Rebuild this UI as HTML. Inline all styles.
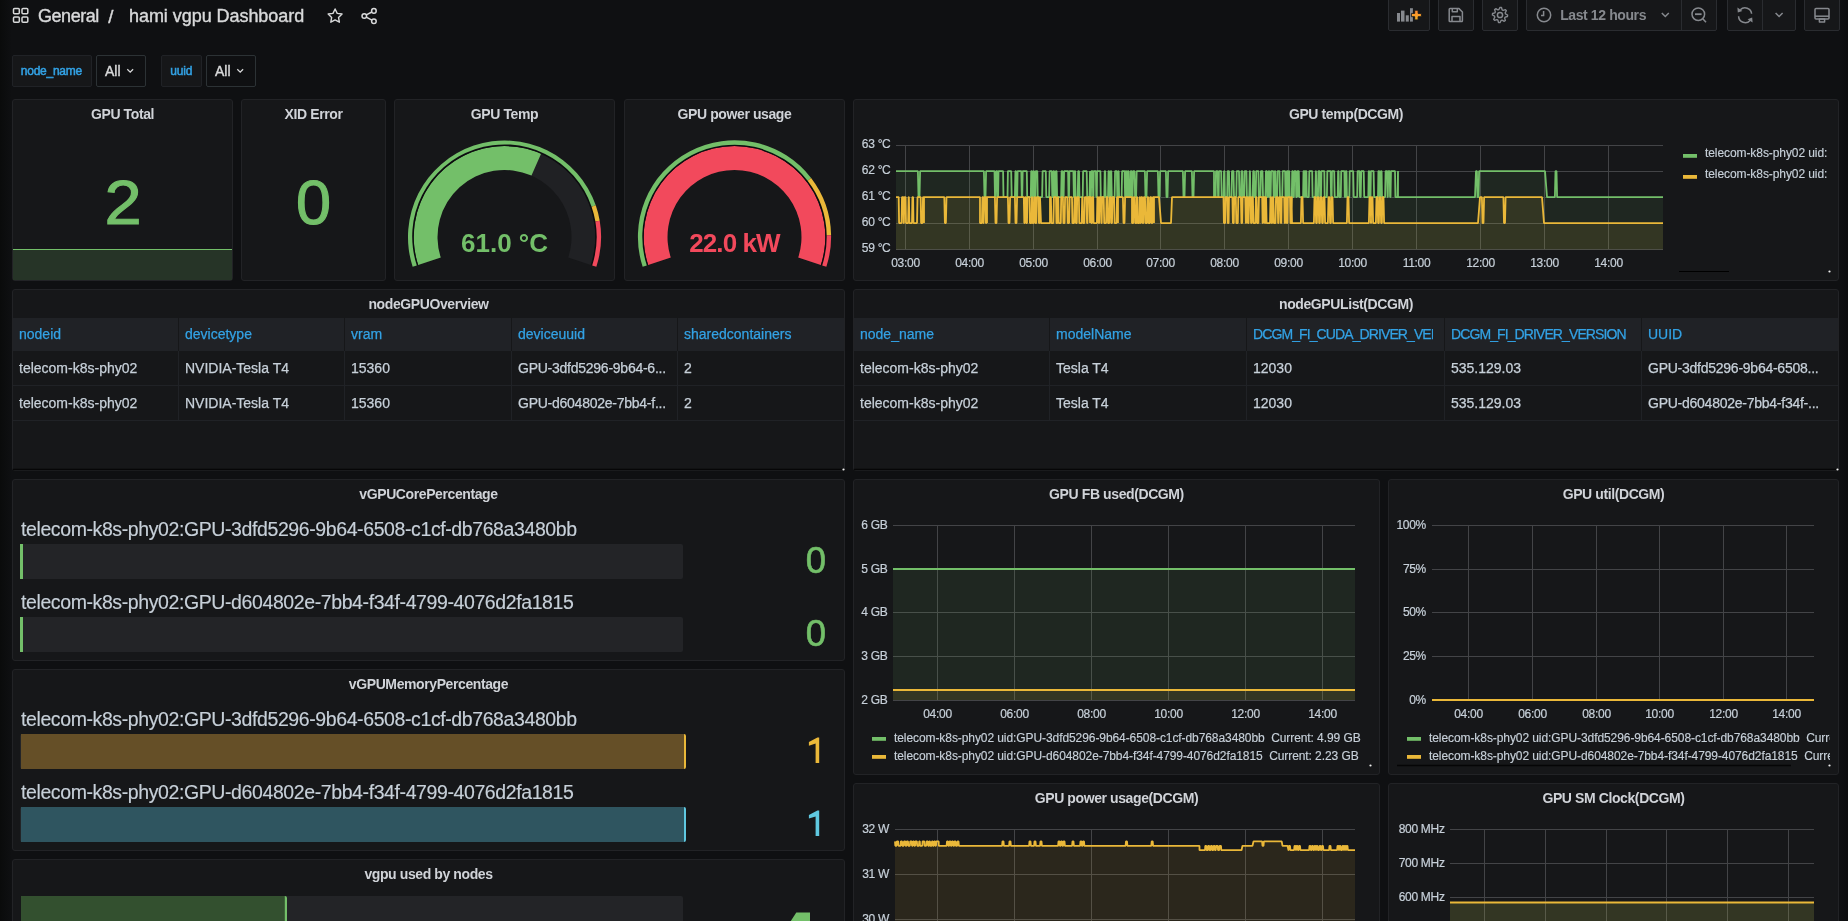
<!DOCTYPE html><html><head><meta charset="utf-8"><style>
html,body{-webkit-font-smoothing:antialiased;margin:0;padding:0;width:1848px;height:921px;overflow:hidden;background:#0f1012;font-family:"Liberation Sans",sans-serif;}
body{position:relative;}
.t{position:absolute;white-space:nowrap;}
.p{position:absolute;background:#161719;border:1px solid #222326;border-radius:3px;}
.a{position:absolute;}
svg.full{position:absolute;left:0;top:0;}
</style></head><body>
<div class="a" style="left:0;top:0;width:12px;height:921px;background:linear-gradient(90deg,#0a0b0b,#0f1012)"></div>
<div class="a" style="left:1840px;top:0;width:8px;height:921px;background:linear-gradient(90deg,#0f1012,#0c0d0e)"></div>
<div class="a" style="left:1388px;top:-3px;width:40px;height:32px;background:#161719;border:1px solid #2a2c30;border-radius:2px"></div>
<div class="a" style="left:1438px;top:-3px;width:34px;height:32px;background:#161719;border:1px solid #2a2c30;border-radius:2px"></div>
<div class="a" style="left:1482px;top:-3px;width:34px;height:32px;background:#161719;border:1px solid #2a2c30;border-radius:2px"></div>
<div class="a" style="left:1526px;top:-3px;width:189px;height:32px;background:#161719;border:1px solid #2a2c30;border-radius:2px"></div>
<div class="a" style="left:1727px;top:-3px;width:67px;height:32px;background:#161719;border:1px solid #2a2c30;border-radius:2px"></div>
<div class="a" style="left:1804px;top:-3px;width:34px;height:32px;background:#161719;border:1px solid #2a2c30;border-radius:2px"></div>
<div class="a" style="left:12px;top:55px;width:78px;height:30px;background:#161719;border:1px solid #202226;border-radius:2px"></div>
<div class="a" style="left:96px;top:55px;width:48px;height:30px;background:#0f1012;border:1px solid #2c3235;border-radius:2px"></div>
<div class="a" style="left:161px;top:55px;width:39px;height:30px;background:#161719;border:1px solid #202226;border-radius:2px"></div>
<div class="a" style="left:206px;top:55px;width:48px;height:30px;background:#0f1012;border:1px solid #2c3235;border-radius:2px"></div>
<div class="p" style="left:12px;top:99px;width:219px;height:180px"></div>
<div class="p" style="left:241px;top:99px;width:143px;height:180px"></div>
<div class="p" style="left:394px;top:99px;width:219px;height:180px"></div>
<div class="p" style="left:624px;top:99px;width:219px;height:180px"></div>
<div class="p" style="left:853px;top:99px;width:984px;height:180px"></div>
<div class="p" style="left:12px;top:289px;width:831px;height:180px"></div>
<div class="p" style="left:853px;top:289px;width:984px;height:180px"></div>
<div class="p" style="left:12px;top:479px;width:831px;height:180px"></div>
<div class="p" style="left:853px;top:479px;width:525px;height:294px"></div>
<div class="p" style="left:1388px;top:479px;width:449px;height:294px"></div>
<div class="p" style="left:12px;top:669px;width:831px;height:180px"></div>
<div class="p" style="left:12px;top:859px;width:831px;height:180px"></div>
<div class="p" style="left:853px;top:783px;width:525px;height:294px"></div>
<div class="p" style="left:1388px;top:783px;width:449px;height:294px"></div>
<svg class="full" width="1848" height="921" viewBox="0 0 1848 921"><rect x="13.5" y="8.5" width="5.8" height="5.3" rx="1" fill="none" stroke="#d8d9da" stroke-width="1.5"/>
<rect x="22" y="8.5" width="5.8" height="5.3" rx="1" fill="none" stroke="#d8d9da" stroke-width="1.5"/>
<rect x="13.5" y="17" width="5.8" height="5.3" rx="1" fill="none" stroke="#d8d9da" stroke-width="1.5"/>
<rect x="22" y="17" width="5.8" height="5.3" rx="1" fill="none" stroke="#d8d9da" stroke-width="1.5"/>
<polygon points="335.10,9.00 337.22,13.39 342.04,14.04 338.52,17.41 339.39,22.21 335.10,19.90 330.81,22.21 331.68,17.41 328.16,14.04 332.98,13.39" fill="none" stroke="#d8d9da" stroke-width="1.4" stroke-linejoin="round"/>
<g fill="none" stroke="#d8d9da" stroke-width="1.5"><circle cx="364.3" cy="16" r="2.3"/><circle cx="373.9" cy="10.9" r="2.3"/><circle cx="373.9" cy="21.2" r="2.3"/><line x1="366.3" y1="14.9" x2="371.9" y2="12"/><line x1="366.3" y1="17.1" x2="371.9" y2="20.1"/></g>
<line x1="1681.5" y1="0" x2="1681.5" y2="30" stroke="#2a2c30"/>
<line x1="1762.5" y1="0" x2="1762.5" y2="30" stroke="#2a2c30"/>
<g fill="#86898e"><rect x="1397" y="13" width="3" height="8.6"/><rect x="1401" y="10.6" width="3.5" height="11"/><rect x="1405.8" y="15.3" width="3" height="6.3"/><rect x="1410" y="8.2" width="2.9" height="13.4"/></g>
<defs><linearGradient id="og" x1="0" y1="0" x2="0" y2="1"><stop offset="0" stop-color="#ff8833"/><stop offset="1" stop-color="#f5b324"/></linearGradient></defs>
<path d="M1414.7,10.2 h3.4 v3.2 h3.3 v3.3 h-3.3 v3.2 h-3.4 v-3.2 h-3.3 v-3.3 h3.3 Z" fill="url(#og)" stroke="#161719" stroke-width="0.9"/>
<g fill="none" stroke="#86898e" stroke-width="1.5" stroke-linejoin="round"><path d="M1450,8.6 h9 l3.4,3.4 v8.8 a0.8,0.8 0 0 1 -0.8,0.8 h-11.6 a0.8,0.8 0 0 1 -0.8,-0.8 v-11.4 a0.8,0.8 0 0 1 0.8,-0.8 Z"/><path d="M1452.3,8.8 v3 h5 v-3"/><path d="M1452,21.2 v-4.6 h8 v4.6"/></g>
<path d="M1500.00,7.40 L1501.48,7.55 L1502.14,9.83 L1503.11,10.34 L1505.37,9.63 L1506.32,10.78 L1505.17,12.86 L1505.49,13.91 L1507.60,15.00 L1507.45,16.48 L1505.17,17.14 L1504.66,18.11 L1505.37,20.37 L1504.22,21.32 L1502.14,20.17 L1501.09,20.49 L1500.00,22.60 L1498.52,22.45 L1497.86,20.17 L1496.89,19.66 L1494.63,20.37 L1493.68,19.22 L1494.83,17.14 L1494.51,16.09 L1492.40,15.00 L1492.55,13.52 L1494.83,12.86 L1495.34,11.89 L1494.63,9.63 L1495.78,8.68 L1497.86,9.83 L1498.91,9.51Z" fill="none" stroke="#86898e" stroke-width="1.4" stroke-linejoin="round"/>
<circle cx="1500" cy="15" r="2.6" fill="none" stroke="#86898e" stroke-width="1.5"/>
<g fill="none" stroke="#86898e" stroke-width="1.5"><circle cx="1544" cy="15" r="6.7"/><path d="M1543.6,11 v4.6 h-2.6"/></g>
<path d="M1661.8,13 l3.5,3.5 l3.5,-3.5" fill="none" stroke="#86898e" stroke-width="1.5"/>
<g fill="none" stroke="#86898e" stroke-width="1.5"><circle cx="1698.3" cy="14.2" r="6.3"/><line x1="1695" y1="14.2" x2="1701.6" y2="14.2" stroke-width="1.8"/><line x1="1703" y1="19" x2="1706" y2="22.3"/></g>
<g fill="none" stroke="#86898e" stroke-width="1.5"><path d="M1738.6,16.2 a6.6,6.6 0 0 0 11.7,4"/><path d="M1751.6,13.8 a6.6,6.6 0 0 0 -11.3,-4"/></g>
<path d="M1737.4,7.5 l0.4,5 l4.6,-1.6 Z M1752.6,22.6 l-0.4,-5 l-4.6,1.6 Z" fill="#86898e"/>
<path d="M1775.6,13 l3.5,3.5 l3.5,-3.5" fill="none" stroke="#86898e" stroke-width="1.5"/>
<g fill="none" stroke="#86898e" stroke-width="1.5" stroke-linejoin="round"><rect x="1815" y="8.4" width="14" height="10.6" rx="1"/><line x1="1815" y1="16.2" x2="1829" y2="16.2"/><rect x="1819.4" y="19" width="5.2" height="3"/></g>
<path d="M127.3,69.2 l2.9,2.9 l2.9,-2.9" fill="none" stroke="#d8d9da" stroke-width="1.3"/>
<path d="M237.3,69.2 l2.9,2.9 l2.9,-2.9" fill="none" stroke="#d8d9da" stroke-width="1.3"/>
<rect x="13" y="249" width="219" height="31" fill="#263427"/>
<line x1="13" y1="249.5" x2="232" y2="249.5" stroke="#73bf69" stroke-width="1"/>
<path d="M418.14,264.96 A90.8,90.8 0 1 1 590.86,264.96 L568.22,257.60 A67,67 0 1 0 440.78,257.60 Z" fill="#202124"/>
<path d="M418.14,264.96 A90.8,90.8 0 0 1 541.08,153.80 L531.49,175.58 A67,67 0 0 0 440.78,257.60 Z" fill="#73bf69"/>
<path d="M416.81,265.39 A92.2,92.2 0 1 1 592.19,265.39 L590.86,264.96 A90.8,90.8 0 1 0 418.14,264.96 Z" fill="#0c0d0f"/>
<path d="M412.63,266.75 A96.6,96.6 0 0 1 595.75,205.21 L591.60,206.65 A92.2,92.2 0 0 0 416.81,265.39 Z" fill="#73bf69"/>
<path d="M595.75,205.21 A96.6,96.6 0 0 1 599.73,220.71 L595.40,221.45 A92.2,92.2 0 0 0 591.60,206.65 Z" fill="#eab839"/>
<path d="M599.73,220.71 A96.6,96.6 0 0 1 596.37,266.75 L592.19,265.39 A92.2,92.2 0 0 0 595.40,221.45 Z" fill="#f2495c"/>
<path d="M648.14,264.96 A90.8,90.8 0 1 1 820.86,264.96 L798.22,257.60 A67,67 0 1 0 670.78,257.60 Z" fill="#202124"/>
<path d="M648.14,264.96 A90.8,90.8 0 1 1 820.86,264.96 L798.22,257.60 A67,67 0 1 0 670.78,257.60 Z" fill="#f2495c"/>
<path d="M646.81,265.39 A92.2,92.2 0 1 1 822.19,265.39 L820.86,264.96 A90.8,90.8 0 1 0 648.14,264.96 Z" fill="#0c0d0f"/>
<path d="M642.63,266.75 A96.6,96.6 0 0 1 811.13,178.08 L807.64,180.76 A92.2,92.2 0 0 0 646.81,265.39 Z" fill="#73bf69"/>
<path d="M811.13,178.08 A96.6,96.6 0 0 1 831.09,235.20 L826.69,235.28 A92.2,92.2 0 0 0 807.64,180.76 Z" fill="#eab839"/>
<path d="M831.09,235.20 A96.6,96.6 0 0 1 826.37,266.75 L822.19,265.39 A92.2,92.2 0 0 0 826.69,235.28 Z" fill="#f2495c"/>
<line x1="896" y1="145.5" x2="1663" y2="145.5" stroke="#434447" stroke-width="1"/>
<line x1="896" y1="171.5" x2="1663" y2="171.5" stroke="#434447" stroke-width="1"/>
<line x1="896" y1="197.5" x2="1663" y2="197.5" stroke="#434447" stroke-width="1"/>
<line x1="896" y1="223.5" x2="1663" y2="223.5" stroke="#434447" stroke-width="1"/>
<line x1="896" y1="249.5" x2="1663" y2="249.5" stroke="#434447" stroke-width="1"/>
<line x1="905.5" y1="145" x2="905.5" y2="250" stroke="#434447" stroke-width="1"/>
<line x1="969.5" y1="145" x2="969.5" y2="250" stroke="#434447" stroke-width="1"/>
<line x1="1033.5" y1="145" x2="1033.5" y2="250" stroke="#434447" stroke-width="1"/>
<line x1="1097.5" y1="145" x2="1097.5" y2="250" stroke="#434447" stroke-width="1"/>
<line x1="1160.5" y1="145" x2="1160.5" y2="250" stroke="#434447" stroke-width="1"/>
<line x1="1224.5" y1="145" x2="1224.5" y2="250" stroke="#434447" stroke-width="1"/>
<line x1="1288.5" y1="145" x2="1288.5" y2="250" stroke="#434447" stroke-width="1"/>
<line x1="1352.5" y1="145" x2="1352.5" y2="250" stroke="#434447" stroke-width="1"/>
<line x1="1416.5" y1="145" x2="1416.5" y2="250" stroke="#434447" stroke-width="1"/>
<line x1="1480.5" y1="145" x2="1480.5" y2="250" stroke="#434447" stroke-width="1"/>
<line x1="1544.5" y1="145" x2="1544.5" y2="250" stroke="#434447" stroke-width="1"/>
<line x1="1608.5" y1="145" x2="1608.5" y2="250" stroke="#434447" stroke-width="1"/>
<path d="M896,171.1 L917,171.1 L917.9,171.1 L918.5,197.1 L919.5,197.1 L920.1,171.1 L983,171.1 L983.9,171.1 L984.5,197.1 L985.5,197.1 L986.1,171.1 L994,171.1 L994.5,171.1 L995.0,197.1 L995.6,197.1 L996.1,171.1 L997.2,171.1 L997.6,197.1 L998.1,197.1 L998.5,171.1 L1003.1,171.1 L1003.5,197.1 L1007.5,197.1 L1007.9,171.1 L1011.2,171.1 L1011.7,197.1 L1014.9,197.1 L1015.4,171.1 L1016.0,171.1 L1016.5,197.1 L1017.2,197.1 L1017.6,171.1 L1021.3,171.1 L1021.8,197.1 L1022.2,197.1 L1022.7,171.1 L1026.8,171.1 L1027.2,197.1 L1030.8,197.1 L1031.2,171.1 L1032.0,171.1 L1032.4,197.1 L1033.0,197.1 L1033.4,171.1 L1034.0,171.1 L1034.4,197.1 L1035.3,197.1 L1035.7,171.1 L1037.3,171.1 L1037.7,197.1 L1042.1,197.1 L1042.6,171.1 L1045.8,171.1 L1046.3,197.1 L1049.1,197.1 L1049.6,171.1 L1051.8,171.1 L1052.3,197.1 L1053.0,197.1 L1053.4,171.1 L1054.1,171.1 L1054.6,197.1 L1055.4,197.1 L1055.9,171.1 L1056.6,171.1 L1057.1,197.1 L1061.1,197.1 L1061.6,171.1 L1062.4,171.1 L1062.9,197.1 L1063.6,197.1 L1064.1,171.1 L1068.1,171.1 L1068.5,197.1 L1069.0,197.1 L1069.4,171.1 L1073.4,171.1 L1073.9,197.1 L1074.2,197.1 L1074.7,171.1 L1075.2,171.1 L1075.6,197.1 L1077.7,197.1 L1078.2,171.1 L1079.0,171.1 L1079.5,197.1 L1082.7,197.1 L1083.1,171.1 L1086.7,171.1 L1087.2,197.1 L1089.5,197.1 L1090,171.1 L1090,197.1 L1090.9,197.1 L1091.4,171.1 L1092.6,171.1 L1093.1,197.1 L1093.4,197.1 L1093.8,171.1 L1095.9,171.1 L1096.3,197.1 L1096.7,197.1 L1097.1,171.1 L1100.4,171.1 L1100.8,197.1 L1104.3,197.1 L1104.7,171.1 L1105.2,171.1 L1105.7,197.1 L1108.0,197.1 L1108.5,171.1 L1109.1,171.1 L1109.6,197.1 L1110.3,197.1 L1110.7,171.1 L1111.3,171.1 L1111.8,197.1 L1114.6,197.1 L1115.1,171.1 L1116.9,171.1 L1117.3,197.1 L1117.9,197.1 L1118.4,171.1 L1118.7,171.1 L1119.1,197.1 L1121.6,197.1 L1122.1,171.1 L1124.6,171.1 L1125.1,197.1 L1125.4,197.1 L1125.8,171.1 L1126.4,171.1 L1126.9,197.1 L1127.4,197.1 L1127.8,171.1 L1128.6,171.1 L1129.0,197.1 L1130.2,197.1 L1130.7,171.1 L1131.6,171.1 L1132.1,197.1 L1132.5,197.1 L1133,171.1 L1134.5,171.1 L1135.1,197.1 L1136.1,197.1 L1136.7,171.1 L1144.9,171.1 L1145.5,197.1 L1146.5,197.1 L1147.1,171.1 L1157.9,171.1 L1158.5,197.1 L1159.5,197.1 L1160.1,171.1 L1165.9,171.1 L1166.5,197.1 L1167.5,197.1 L1168.1,171.1 L1182.9,171.1 L1183.5,197.1 L1184.5,197.1 L1185.1,171.1 L1191.9,171.1 L1192.5,197.1 L1193.5,197.1 L1194.1,171.1 L1197,171.1 L1214,171.1 L1214,197.1 L1215.6,197.1 L1216.0,171.1 L1217.6,171.1 L1218.1,197.1 L1218.6,197.1 L1219.0,171.1 L1221.2,171.1 L1221.7,197.1 L1223.6,197.1 L1224.0,171.1 L1224.5,171.1 L1224.9,197.1 L1227.2,197.1 L1227.6,171.1 L1229.0,171.1 L1229.4,197.1 L1231.5,197.1 L1232.0,171.1 L1233.5,171.1 L1234.0,197.1 L1236.3,197.1 L1236.7,171.1 L1239.0,171.1 L1239.5,197.1 L1241.0,197.1 L1241.5,171.1 L1242.4,171.1 L1242.8,197.1 L1244.2,197.1 L1244.7,171.1 L1246.5,171.1 L1246.9,197.1 L1249.2,197.1 L1249.7,171.1 L1250.0,171.1 L1250.5,197.1 L1252.7,197.1 L1253.2,171.1 L1254.0,171.1 L1254.5,197.1 L1255.7,197.1 L1256.2,171.1 L1258.4,171.1 L1258.8,197.1 L1260.4,197.1 L1260.9,171.1 L1262.5,171.1 L1263.0,197.1 L1265.4,197.1 L1265.9,171.1 L1266.9,171.1 L1267.4,197.1 L1268.2,197.1 L1268.7,171.1 L1269.3,171.1 L1269.7,197.1 L1270.6,197.1 L1271.1,171.1 L1273.2,171.1 L1273.7,197.1 L1274.4,197.1 L1274.8,171.1 L1275.3,171.1 L1275.7,197.1 L1277.1,197.1 L1277.6,171.1 L1279.5,171.1 L1280.0,197.1 L1282.2,197.1 L1282.7,171.1 L1285.1,171.1 L1285.5,197.1 L1286.4,197.1 L1286.9,171.1 L1287.8,171.1 L1288.2,197.1 L1288.5,197.1 L1288.9,171.1 L1289.3,171.1 L1289.7,197.1 L1291.8,197.1 L1292.2,171.1 L1292.8,171.1 L1293.2,197.1 L1293.9,197.1 L1294.3,171.1 L1295.8,171.1 L1296.2,197.1 L1296.8,197.1 L1297.3,171.1 L1297.5,171.1 L1298,197.1 L1298,171.1 L1298.8,171.1 L1299.3,197.1 L1303.1,197.1 L1303.5,171.1 L1304.4,171.1 L1304.8,197.1 L1305.1,197.1 L1305.5,171.1 L1306.4,171.1 L1306.8,197.1 L1308.8,197.1 L1309.3,171.1 L1312.2,171.1 L1312.6,197.1 L1315.3,197.1 L1315.8,171.1 L1316.0,171.1 L1316.5,197.1 L1318.0,197.1 L1318.4,171.1 L1319.7,171.1 L1320.2,197.1 L1321.0,197.1 L1321.4,171.1 L1324.3,171.1 L1324.7,197.1 L1326.9,197.1 L1327.3,171.1 L1330.6,171.1 L1331.1,197.1 L1331.6,197.1 L1332.0,171.1 L1334.2,171.1 L1334.7,197.1 L1337.7,197.1 L1338.1,171.1 L1338.6,171.1 L1339.1,197.1 L1340.8,197.1 L1341.2,171.1 L1344.4,171.1 L1344.8,197.1 L1345.3,197.1 L1345.8,171.1 L1346.5,171.1 L1346.9,197.1 L1349.3,197.1 L1349.7,171.1 L1353.2,171.1 L1353.7,197.1 L1357.2,197.1 L1357.6,171.1 L1359.5,171.1 L1360.0,197.1 L1360.7,197.1 L1361.2,171.1 L1363.7,171.1 L1364.2,197.1 L1368.3,197.1 L1368.7,171.1 L1369.2,171.1 L1369.7,197.1 L1370.5,197.1 L1370.9,171.1 L1373.6,171.1 L1374.1,197.1 L1378.0,197.1 L1378.4,171.1 L1379.3,171.1 L1379.7,197.1 L1380.5,197.1 L1380.9,171.1 L1381.6,171.1 L1382.0,197.1 L1385.1,197.1 L1385.6,171.1 L1387.1,171.1 L1387.6,197.1 L1387.8,197.1 L1388.3,171.1 L1389.7,171.1 L1390.1,197.1 L1390.5,197.1 L1391.0,171.1 L1395.0,171.1 L1395.4,197.1 L1397.5,197.1 L1398,171.1 L1398,197.1 L1475,197.1 L1476,171.1 L1476.9,171.1 L1477.5,197.1 L1478.5,197.1 L1479.1,171.1 L1545,171.1 L1547,197.1 L1554.9,197.1 L1555.5,171.1 L1556.5,171.1 L1557.1,197.1 L1663,197.1 L1663,249.5 L896,249.5 Z" fill="#73bf69" fill-opacity="0.1"/>
<path d="M896,197.1 L898.7,197.1 L899.1,223.1 L901.5,223.1 L902.0,197.1 L903.2,197.1 L903.6,223.1 L903.9,223.1 L904.3,197.1 L905.6,197.1 L906.0,223.1 L908.1,223.1 L908.6,197.1 L908.9,197.1 L909.4,223.1 L912.0,223.1 L912.4,197.1 L913.1,197.1 L913.5,223.1 L917.0,223.1 L917.5,197.1 L920.7,197.1 L921.1,223.1 L922.5,223.1 L923.0,197.1 L923.5,197.1 L924,223.1 L924,197.1 L944.3,197.1 L944.9,223.1 L945.9,223.1 L946.5,197.1 L980,197.1 L980,223.1 L981.9,223.1 L982.4,197.1 L982.9,197.1 L983.3,223.1 L983.6,223.1 L984.1,197.1 L985.4,197.1 L985.9,223.1 L986.4,223.1 L986.9,197.1 L986.5,197.1 L987,223.1 L987,197.1 L994.9,197.1 L995.5,223.1 L996.5,223.1 L997.1,197.1 L1007.9,197.1 L1008.5,223.1 L1009.5,223.1 L1010.1,197.1 L1014.9,197.1 L1015.5,223.1 L1016.5,223.1 L1017.1,197.1 L1022,197.1 L1023.8,197.1 L1024.3,223.1 L1024.7,223.1 L1025.2,197.1 L1025.8,197.1 L1026.2,223.1 L1027.0,223.1 L1027.4,197.1 L1029.5,197.1 L1029.9,223.1 L1031.4,223.1 L1031.8,197.1 L1032.2,197.1 L1032.6,223.1 L1033.7,223.1 L1034.2,197.1 L1035.0,197.1 L1035.4,223.1 L1036.3,223.1 L1036.7,197.1 L1038.5,197.1 L1038.9,223.1 L1039.5,223.1 L1040,197.1 L1041,223.1 L1050,223.1 L1050,197.1 L1050.9,197.1 L1051.4,223.1 L1053.4,223.1 L1053.9,197.1 L1056.0,197.1 L1056.4,223.1 L1057.4,223.1 L1057.8,197.1 L1058.3,197.1 L1058.7,223.1 L1060.8,223.1 L1061.2,197.1 L1062.9,197.1 L1063.4,223.1 L1064.6,223.1 L1065.1,197.1 L1067.3,197.1 L1067.7,223.1 L1069.1,223.1 L1069.6,197.1 L1072.0,197.1 L1072.4,223.1 L1074.1,223.1 L1074.6,197.1 L1075.4,197.1 L1075.9,223.1 L1076.8,223.1 L1077.2,197.1 L1078.9,197.1 L1079.3,223.1 L1081.7,223.1 L1082.2,197.1 L1082.5,197.1 L1083.0,223.1 L1084.4,223.1 L1084.8,197.1 L1086.6,197.1 L1087.0,223.1 L1087.5,223.1 L1087.9,197.1 L1089.5,197.1 L1090,223.1 L1090,197.1 L1090.9,197.1 L1091.4,223.1 L1092.0,223.1 L1092.4,197.1 L1093.2,197.1 L1093.6,223.1 L1096.9,223.1 L1097.4,197.1 L1098.2,197.1 L1098.7,223.1 L1099.2,223.1 L1099.6,197.1 L1100.9,197.1 L1101.4,223.1 L1101.7,223.1 L1102.1,197.1 L1103.7,197.1 L1104.2,223.1 L1106.1,223.1 L1106.5,197.1 L1107.6,197.1 L1108.0,223.1 L1109.3,223.1 L1109.8,197.1 L1110.9,197.1 L1111.3,223.1 L1112.0,223.1 L1112.5,197.1 L1114.1,197.1 L1114.6,223.1 L1116.6,223.1 L1117.0,197.1 L1117.5,197.1 L1118,223.1 L1118,197.1 L1122.9,197.1 L1123.5,223.1 L1124.5,223.1 L1125.1,197.1 L1132,197.1 L1132,223.1 L1133.3,223.1 L1133.7,197.1 L1134.8,197.1 L1135.3,223.1 L1136.5,223.1 L1136.9,197.1 L1137.3,197.1 L1137.7,223.1 L1139.3,223.1 L1139.7,197.1 L1140.1,197.1 L1140.5,223.1 L1140.8,223.1 L1141.2,197.1 L1142.2,197.1 L1142.6,223.1 L1143.4,223.1 L1143.8,197.1 L1145.0,197.1 L1145.5,223.1 L1146.9,223.1 L1147.4,197.1 L1148.2,197.1 L1148.6,223.1 L1149.8,223.1 L1150.2,197.1 L1151.2,197.1 L1151.6,223.1 L1152.4,223.1 L1152.9,197.1 L1153.5,197.1 L1154,223.1 L1154,197.1 L1159,197.1 L1161,223.1 L1171,223.1 L1172,197.1 L1223,197.1 L1223.5,197.1 L1223.9,223.1 L1225.1,223.1 L1225.5,197.1 L1227.2,197.1 L1227.7,223.1 L1228.6,223.1 L1229.0,197.1 L1232.4,197.1 L1232.9,223.1 L1233.8,223.1 L1234.2,197.1 L1235.8,197.1 L1236.3,223.1 L1237.8,223.1 L1238.3,197.1 L1240.9,197.1 L1241.4,223.1 L1242.2,223.1 L1242.6,197.1 L1245.3,197.1 L1245.8,223.1 L1246.1,223.1 L1246.5,197.1 L1247.4,197.1 L1247.9,223.1 L1248.6,223.1 L1249.1,197.1 L1250.6,197.1 L1251.0,223.1 L1251.5,223.1 L1252.0,197.1 L1252.9,197.1 L1253.4,223.1 L1255.4,223.1 L1255.9,197.1 L1256.6,197.1 L1257.1,223.1 L1258.4,223.1 L1258.9,197.1 L1262.2,197.1 L1262.6,223.1 L1263.0,223.1 L1263.4,197.1 L1264.4,197.1 L1264.8,223.1 L1265.3,223.1 L1265.8,197.1 L1266.1,197.1 L1266.6,223.1 L1270.0,223.1 L1270.5,197.1 L1271.1,197.1 L1271.6,223.1 L1272.1,223.1 L1272.6,197.1 L1273.4,197.1 L1273.8,223.1 L1275.5,223.1 L1276.0,197.1 L1277.6,197.1 L1278.1,223.1 L1278.5,223.1 L1279.0,197.1 L1280.3,197.1 L1280.8,223.1 L1281.3,223.1 L1281.7,197.1 L1284.2,197.1 L1284.7,223.1 L1285.2,223.1 L1285.7,197.1 L1286.3,197.1 L1286.7,223.1 L1287.4,223.1 L1287.8,197.1 L1290.0,197.1 L1290.4,223.1 L1291.5,223.1 L1291.9,197.1 L1291.5,197.1 L1292,223.1 L1300.9,223.1 L1301.5,197.1 L1302.5,197.1 L1303.1,223.1 L1313.9,223.1 L1314.5,197.1 L1315.5,197.1 L1316.1,223.1 L1316.9,223.1 L1317.5,197.1 L1318.5,197.1 L1319.1,223.1 L1319.9,223.1 L1320.5,197.1 L1321.5,197.1 L1322.1,223.1 L1322.9,223.1 L1323.5,197.1 L1324.5,197.1 L1325.1,223.1 L1327.9,223.1 L1328.5,197.1 L1329.5,197.1 L1330.1,223.1 L1330.9,223.1 L1331.5,197.1 L1332.5,197.1 L1333.1,223.1 L1346.9,223.1 L1347.5,197.1 L1348.5,197.1 L1349.1,223.1 L1368.9,223.1 L1369.5,197.1 L1370.5,197.1 L1371.1,223.1 L1370.9,223.1 L1371.5,197.1 L1372.5,197.1 L1373.1,223.1 L1375.9,223.1 L1376.5,197.1 L1377.5,197.1 L1378.1,223.1 L1378.9,223.1 L1379.5,197.1 L1380.5,197.1 L1381.1,223.1 L1381.9,223.1 L1382.5,197.1 L1383.5,197.1 L1384.1,223.1 L1386,223.1 L1478,223.1 L1480,197.1 L1481.9,197.1 L1482.5,223.1 L1483.5,223.1 L1484.1,197.1 L1503.4,197.1 L1504.0,223.1 L1505.0,223.1 L1505.6,197.1 L1542,197.1 L1544,223.1 L1663,223.1 L1663,249.5 L896,249.5 Z" fill="#eab839" fill-opacity="0.1"/>
<path d="M896,171.1 L917,171.1 L917.9,171.1 L918.5,197.1 L919.5,197.1 L920.1,171.1 L983,171.1 L983.9,171.1 L984.5,197.1 L985.5,197.1 L986.1,171.1 L994,171.1 L994.5,171.1 L995.0,197.1 L995.6,197.1 L996.1,171.1 L997.2,171.1 L997.6,197.1 L998.1,197.1 L998.5,171.1 L1003.1,171.1 L1003.5,197.1 L1007.5,197.1 L1007.9,171.1 L1011.2,171.1 L1011.7,197.1 L1014.9,197.1 L1015.4,171.1 L1016.0,171.1 L1016.5,197.1 L1017.2,197.1 L1017.6,171.1 L1021.3,171.1 L1021.8,197.1 L1022.2,197.1 L1022.7,171.1 L1026.8,171.1 L1027.2,197.1 L1030.8,197.1 L1031.2,171.1 L1032.0,171.1 L1032.4,197.1 L1033.0,197.1 L1033.4,171.1 L1034.0,171.1 L1034.4,197.1 L1035.3,197.1 L1035.7,171.1 L1037.3,171.1 L1037.7,197.1 L1042.1,197.1 L1042.6,171.1 L1045.8,171.1 L1046.3,197.1 L1049.1,197.1 L1049.6,171.1 L1051.8,171.1 L1052.3,197.1 L1053.0,197.1 L1053.4,171.1 L1054.1,171.1 L1054.6,197.1 L1055.4,197.1 L1055.9,171.1 L1056.6,171.1 L1057.1,197.1 L1061.1,197.1 L1061.6,171.1 L1062.4,171.1 L1062.9,197.1 L1063.6,197.1 L1064.1,171.1 L1068.1,171.1 L1068.5,197.1 L1069.0,197.1 L1069.4,171.1 L1073.4,171.1 L1073.9,197.1 L1074.2,197.1 L1074.7,171.1 L1075.2,171.1 L1075.6,197.1 L1077.7,197.1 L1078.2,171.1 L1079.0,171.1 L1079.5,197.1 L1082.7,197.1 L1083.1,171.1 L1086.7,171.1 L1087.2,197.1 L1089.5,197.1 L1090,171.1 L1090,197.1 L1090.9,197.1 L1091.4,171.1 L1092.6,171.1 L1093.1,197.1 L1093.4,197.1 L1093.8,171.1 L1095.9,171.1 L1096.3,197.1 L1096.7,197.1 L1097.1,171.1 L1100.4,171.1 L1100.8,197.1 L1104.3,197.1 L1104.7,171.1 L1105.2,171.1 L1105.7,197.1 L1108.0,197.1 L1108.5,171.1 L1109.1,171.1 L1109.6,197.1 L1110.3,197.1 L1110.7,171.1 L1111.3,171.1 L1111.8,197.1 L1114.6,197.1 L1115.1,171.1 L1116.9,171.1 L1117.3,197.1 L1117.9,197.1 L1118.4,171.1 L1118.7,171.1 L1119.1,197.1 L1121.6,197.1 L1122.1,171.1 L1124.6,171.1 L1125.1,197.1 L1125.4,197.1 L1125.8,171.1 L1126.4,171.1 L1126.9,197.1 L1127.4,197.1 L1127.8,171.1 L1128.6,171.1 L1129.0,197.1 L1130.2,197.1 L1130.7,171.1 L1131.6,171.1 L1132.1,197.1 L1132.5,197.1 L1133,171.1 L1134.5,171.1 L1135.1,197.1 L1136.1,197.1 L1136.7,171.1 L1144.9,171.1 L1145.5,197.1 L1146.5,197.1 L1147.1,171.1 L1157.9,171.1 L1158.5,197.1 L1159.5,197.1 L1160.1,171.1 L1165.9,171.1 L1166.5,197.1 L1167.5,197.1 L1168.1,171.1 L1182.9,171.1 L1183.5,197.1 L1184.5,197.1 L1185.1,171.1 L1191.9,171.1 L1192.5,197.1 L1193.5,197.1 L1194.1,171.1 L1197,171.1 L1214,171.1 L1214,197.1 L1215.6,197.1 L1216.0,171.1 L1217.6,171.1 L1218.1,197.1 L1218.6,197.1 L1219.0,171.1 L1221.2,171.1 L1221.7,197.1 L1223.6,197.1 L1224.0,171.1 L1224.5,171.1 L1224.9,197.1 L1227.2,197.1 L1227.6,171.1 L1229.0,171.1 L1229.4,197.1 L1231.5,197.1 L1232.0,171.1 L1233.5,171.1 L1234.0,197.1 L1236.3,197.1 L1236.7,171.1 L1239.0,171.1 L1239.5,197.1 L1241.0,197.1 L1241.5,171.1 L1242.4,171.1 L1242.8,197.1 L1244.2,197.1 L1244.7,171.1 L1246.5,171.1 L1246.9,197.1 L1249.2,197.1 L1249.7,171.1 L1250.0,171.1 L1250.5,197.1 L1252.7,197.1 L1253.2,171.1 L1254.0,171.1 L1254.5,197.1 L1255.7,197.1 L1256.2,171.1 L1258.4,171.1 L1258.8,197.1 L1260.4,197.1 L1260.9,171.1 L1262.5,171.1 L1263.0,197.1 L1265.4,197.1 L1265.9,171.1 L1266.9,171.1 L1267.4,197.1 L1268.2,197.1 L1268.7,171.1 L1269.3,171.1 L1269.7,197.1 L1270.6,197.1 L1271.1,171.1 L1273.2,171.1 L1273.7,197.1 L1274.4,197.1 L1274.8,171.1 L1275.3,171.1 L1275.7,197.1 L1277.1,197.1 L1277.6,171.1 L1279.5,171.1 L1280.0,197.1 L1282.2,197.1 L1282.7,171.1 L1285.1,171.1 L1285.5,197.1 L1286.4,197.1 L1286.9,171.1 L1287.8,171.1 L1288.2,197.1 L1288.5,197.1 L1288.9,171.1 L1289.3,171.1 L1289.7,197.1 L1291.8,197.1 L1292.2,171.1 L1292.8,171.1 L1293.2,197.1 L1293.9,197.1 L1294.3,171.1 L1295.8,171.1 L1296.2,197.1 L1296.8,197.1 L1297.3,171.1 L1297.5,171.1 L1298,197.1 L1298,171.1 L1298.8,171.1 L1299.3,197.1 L1303.1,197.1 L1303.5,171.1 L1304.4,171.1 L1304.8,197.1 L1305.1,197.1 L1305.5,171.1 L1306.4,171.1 L1306.8,197.1 L1308.8,197.1 L1309.3,171.1 L1312.2,171.1 L1312.6,197.1 L1315.3,197.1 L1315.8,171.1 L1316.0,171.1 L1316.5,197.1 L1318.0,197.1 L1318.4,171.1 L1319.7,171.1 L1320.2,197.1 L1321.0,197.1 L1321.4,171.1 L1324.3,171.1 L1324.7,197.1 L1326.9,197.1 L1327.3,171.1 L1330.6,171.1 L1331.1,197.1 L1331.6,197.1 L1332.0,171.1 L1334.2,171.1 L1334.7,197.1 L1337.7,197.1 L1338.1,171.1 L1338.6,171.1 L1339.1,197.1 L1340.8,197.1 L1341.2,171.1 L1344.4,171.1 L1344.8,197.1 L1345.3,197.1 L1345.8,171.1 L1346.5,171.1 L1346.9,197.1 L1349.3,197.1 L1349.7,171.1 L1353.2,171.1 L1353.7,197.1 L1357.2,197.1 L1357.6,171.1 L1359.5,171.1 L1360.0,197.1 L1360.7,197.1 L1361.2,171.1 L1363.7,171.1 L1364.2,197.1 L1368.3,197.1 L1368.7,171.1 L1369.2,171.1 L1369.7,197.1 L1370.5,197.1 L1370.9,171.1 L1373.6,171.1 L1374.1,197.1 L1378.0,197.1 L1378.4,171.1 L1379.3,171.1 L1379.7,197.1 L1380.5,197.1 L1380.9,171.1 L1381.6,171.1 L1382.0,197.1 L1385.1,197.1 L1385.6,171.1 L1387.1,171.1 L1387.6,197.1 L1387.8,197.1 L1388.3,171.1 L1389.7,171.1 L1390.1,197.1 L1390.5,197.1 L1391.0,171.1 L1395.0,171.1 L1395.4,197.1 L1397.5,197.1 L1398,171.1 L1398,197.1 L1475,197.1 L1476,171.1 L1476.9,171.1 L1477.5,197.1 L1478.5,197.1 L1479.1,171.1 L1545,171.1 L1547,197.1 L1554.9,197.1 L1555.5,171.1 L1556.5,171.1 L1557.1,197.1 L1663,197.1" fill="none" stroke="#73bf69" stroke-width="1.8" stroke-linejoin="bevel"/>
<path d="M896,197.1 L898.7,197.1 L899.1,223.1 L901.5,223.1 L902.0,197.1 L903.2,197.1 L903.6,223.1 L903.9,223.1 L904.3,197.1 L905.6,197.1 L906.0,223.1 L908.1,223.1 L908.6,197.1 L908.9,197.1 L909.4,223.1 L912.0,223.1 L912.4,197.1 L913.1,197.1 L913.5,223.1 L917.0,223.1 L917.5,197.1 L920.7,197.1 L921.1,223.1 L922.5,223.1 L923.0,197.1 L923.5,197.1 L924,223.1 L924,197.1 L944.3,197.1 L944.9,223.1 L945.9,223.1 L946.5,197.1 L980,197.1 L980,223.1 L981.9,223.1 L982.4,197.1 L982.9,197.1 L983.3,223.1 L983.6,223.1 L984.1,197.1 L985.4,197.1 L985.9,223.1 L986.4,223.1 L986.9,197.1 L986.5,197.1 L987,223.1 L987,197.1 L994.9,197.1 L995.5,223.1 L996.5,223.1 L997.1,197.1 L1007.9,197.1 L1008.5,223.1 L1009.5,223.1 L1010.1,197.1 L1014.9,197.1 L1015.5,223.1 L1016.5,223.1 L1017.1,197.1 L1022,197.1 L1023.8,197.1 L1024.3,223.1 L1024.7,223.1 L1025.2,197.1 L1025.8,197.1 L1026.2,223.1 L1027.0,223.1 L1027.4,197.1 L1029.5,197.1 L1029.9,223.1 L1031.4,223.1 L1031.8,197.1 L1032.2,197.1 L1032.6,223.1 L1033.7,223.1 L1034.2,197.1 L1035.0,197.1 L1035.4,223.1 L1036.3,223.1 L1036.7,197.1 L1038.5,197.1 L1038.9,223.1 L1039.5,223.1 L1040,197.1 L1041,223.1 L1050,223.1 L1050,197.1 L1050.9,197.1 L1051.4,223.1 L1053.4,223.1 L1053.9,197.1 L1056.0,197.1 L1056.4,223.1 L1057.4,223.1 L1057.8,197.1 L1058.3,197.1 L1058.7,223.1 L1060.8,223.1 L1061.2,197.1 L1062.9,197.1 L1063.4,223.1 L1064.6,223.1 L1065.1,197.1 L1067.3,197.1 L1067.7,223.1 L1069.1,223.1 L1069.6,197.1 L1072.0,197.1 L1072.4,223.1 L1074.1,223.1 L1074.6,197.1 L1075.4,197.1 L1075.9,223.1 L1076.8,223.1 L1077.2,197.1 L1078.9,197.1 L1079.3,223.1 L1081.7,223.1 L1082.2,197.1 L1082.5,197.1 L1083.0,223.1 L1084.4,223.1 L1084.8,197.1 L1086.6,197.1 L1087.0,223.1 L1087.5,223.1 L1087.9,197.1 L1089.5,197.1 L1090,223.1 L1090,197.1 L1090.9,197.1 L1091.4,223.1 L1092.0,223.1 L1092.4,197.1 L1093.2,197.1 L1093.6,223.1 L1096.9,223.1 L1097.4,197.1 L1098.2,197.1 L1098.7,223.1 L1099.2,223.1 L1099.6,197.1 L1100.9,197.1 L1101.4,223.1 L1101.7,223.1 L1102.1,197.1 L1103.7,197.1 L1104.2,223.1 L1106.1,223.1 L1106.5,197.1 L1107.6,197.1 L1108.0,223.1 L1109.3,223.1 L1109.8,197.1 L1110.9,197.1 L1111.3,223.1 L1112.0,223.1 L1112.5,197.1 L1114.1,197.1 L1114.6,223.1 L1116.6,223.1 L1117.0,197.1 L1117.5,197.1 L1118,223.1 L1118,197.1 L1122.9,197.1 L1123.5,223.1 L1124.5,223.1 L1125.1,197.1 L1132,197.1 L1132,223.1 L1133.3,223.1 L1133.7,197.1 L1134.8,197.1 L1135.3,223.1 L1136.5,223.1 L1136.9,197.1 L1137.3,197.1 L1137.7,223.1 L1139.3,223.1 L1139.7,197.1 L1140.1,197.1 L1140.5,223.1 L1140.8,223.1 L1141.2,197.1 L1142.2,197.1 L1142.6,223.1 L1143.4,223.1 L1143.8,197.1 L1145.0,197.1 L1145.5,223.1 L1146.9,223.1 L1147.4,197.1 L1148.2,197.1 L1148.6,223.1 L1149.8,223.1 L1150.2,197.1 L1151.2,197.1 L1151.6,223.1 L1152.4,223.1 L1152.9,197.1 L1153.5,197.1 L1154,223.1 L1154,197.1 L1159,197.1 L1161,223.1 L1171,223.1 L1172,197.1 L1223,197.1 L1223.5,197.1 L1223.9,223.1 L1225.1,223.1 L1225.5,197.1 L1227.2,197.1 L1227.7,223.1 L1228.6,223.1 L1229.0,197.1 L1232.4,197.1 L1232.9,223.1 L1233.8,223.1 L1234.2,197.1 L1235.8,197.1 L1236.3,223.1 L1237.8,223.1 L1238.3,197.1 L1240.9,197.1 L1241.4,223.1 L1242.2,223.1 L1242.6,197.1 L1245.3,197.1 L1245.8,223.1 L1246.1,223.1 L1246.5,197.1 L1247.4,197.1 L1247.9,223.1 L1248.6,223.1 L1249.1,197.1 L1250.6,197.1 L1251.0,223.1 L1251.5,223.1 L1252.0,197.1 L1252.9,197.1 L1253.4,223.1 L1255.4,223.1 L1255.9,197.1 L1256.6,197.1 L1257.1,223.1 L1258.4,223.1 L1258.9,197.1 L1262.2,197.1 L1262.6,223.1 L1263.0,223.1 L1263.4,197.1 L1264.4,197.1 L1264.8,223.1 L1265.3,223.1 L1265.8,197.1 L1266.1,197.1 L1266.6,223.1 L1270.0,223.1 L1270.5,197.1 L1271.1,197.1 L1271.6,223.1 L1272.1,223.1 L1272.6,197.1 L1273.4,197.1 L1273.8,223.1 L1275.5,223.1 L1276.0,197.1 L1277.6,197.1 L1278.1,223.1 L1278.5,223.1 L1279.0,197.1 L1280.3,197.1 L1280.8,223.1 L1281.3,223.1 L1281.7,197.1 L1284.2,197.1 L1284.7,223.1 L1285.2,223.1 L1285.7,197.1 L1286.3,197.1 L1286.7,223.1 L1287.4,223.1 L1287.8,197.1 L1290.0,197.1 L1290.4,223.1 L1291.5,223.1 L1291.9,197.1 L1291.5,197.1 L1292,223.1 L1300.9,223.1 L1301.5,197.1 L1302.5,197.1 L1303.1,223.1 L1313.9,223.1 L1314.5,197.1 L1315.5,197.1 L1316.1,223.1 L1316.9,223.1 L1317.5,197.1 L1318.5,197.1 L1319.1,223.1 L1319.9,223.1 L1320.5,197.1 L1321.5,197.1 L1322.1,223.1 L1322.9,223.1 L1323.5,197.1 L1324.5,197.1 L1325.1,223.1 L1327.9,223.1 L1328.5,197.1 L1329.5,197.1 L1330.1,223.1 L1330.9,223.1 L1331.5,197.1 L1332.5,197.1 L1333.1,223.1 L1346.9,223.1 L1347.5,197.1 L1348.5,197.1 L1349.1,223.1 L1368.9,223.1 L1369.5,197.1 L1370.5,197.1 L1371.1,223.1 L1370.9,223.1 L1371.5,197.1 L1372.5,197.1 L1373.1,223.1 L1375.9,223.1 L1376.5,197.1 L1377.5,197.1 L1378.1,223.1 L1378.9,223.1 L1379.5,197.1 L1380.5,197.1 L1381.1,223.1 L1381.9,223.1 L1382.5,197.1 L1383.5,197.1 L1384.1,223.1 L1386,223.1 L1478,223.1 L1480,197.1 L1481.9,197.1 L1482.5,223.1 L1483.5,223.1 L1484.1,197.1 L1503.4,197.1 L1504.0,223.1 L1505.0,223.1 L1505.6,197.1 L1542,197.1 L1544,223.1 L1663,223.1" fill="none" stroke="#eab839" stroke-width="1.8" stroke-linejoin="bevel"/>
<rect x="1683" y="154" width="14" height="3.8" fill="#73bf69"/>
<rect x="1683" y="175" width="14" height="3.8" fill="#eab839"/>
<line x1="1679" y1="271.5" x2="1729" y2="271.5" stroke="#000" stroke-width="1.2"/>
<rect x="13" y="318" width="831" height="33" fill="#202226"/>
<line x1="178.5" y1="318" x2="178.5" y2="351" stroke="#161719" stroke-width="1"/>
<line x1="178.5" y1="351" x2="178.5" y2="420" stroke="#202226" stroke-width="1"/>
<line x1="344.5" y1="318" x2="344.5" y2="351" stroke="#161719" stroke-width="1"/>
<line x1="344.5" y1="351" x2="344.5" y2="420" stroke="#202226" stroke-width="1"/>
<line x1="511.5" y1="318" x2="511.5" y2="351" stroke="#161719" stroke-width="1"/>
<line x1="511.5" y1="351" x2="511.5" y2="420" stroke="#202226" stroke-width="1"/>
<line x1="677.5" y1="318" x2="677.5" y2="351" stroke="#161719" stroke-width="1"/>
<line x1="677.5" y1="351" x2="677.5" y2="420" stroke="#202226" stroke-width="1"/>
<line x1="13" y1="385.5" x2="844" y2="385.5" stroke="#202226" stroke-width="1"/>
<line x1="13" y1="420.5" x2="844" y2="420.5" stroke="#202226" stroke-width="1"/>
<line x1="13" y1="469.5" x2="844" y2="469.5" stroke="#060607" stroke-width="1.5"/>
<rect x="854" y="318" width="984" height="33" fill="#202226"/>
<line x1="1049.5" y1="318" x2="1049.5" y2="351" stroke="#161719" stroke-width="1"/>
<line x1="1049.5" y1="351" x2="1049.5" y2="420" stroke="#202226" stroke-width="1"/>
<line x1="1246.5" y1="318" x2="1246.5" y2="351" stroke="#161719" stroke-width="1"/>
<line x1="1246.5" y1="351" x2="1246.5" y2="420" stroke="#202226" stroke-width="1"/>
<line x1="1444.5" y1="318" x2="1444.5" y2="351" stroke="#161719" stroke-width="1"/>
<line x1="1444.5" y1="351" x2="1444.5" y2="420" stroke="#202226" stroke-width="1"/>
<line x1="1641.5" y1="318" x2="1641.5" y2="351" stroke="#161719" stroke-width="1"/>
<line x1="1641.5" y1="351" x2="1641.5" y2="420" stroke="#202226" stroke-width="1"/>
<line x1="854" y1="385.5" x2="1838" y2="385.5" stroke="#202226" stroke-width="1"/>
<line x1="854" y1="420.5" x2="1838" y2="420.5" stroke="#202226" stroke-width="1"/>
<line x1="854" y1="469.5" x2="1838" y2="469.5" stroke="#060607" stroke-width="1.5"/>
<rect x="20" y="544" width="663" height="35" rx="2" fill="#232427"/>
<rect x="20" y="544" width="3" height="35" fill="#73bf69"/>
<rect x="20" y="617" width="663" height="35" rx="2" fill="#232427"/>
<rect x="20" y="617" width="3" height="35" fill="#73bf69"/>
<rect x="20" y="734" width="663" height="35" rx="2" fill="#232427"/>
<rect x="21" y="734" width="665" height="35" rx="2" fill="#eab839"/>
<rect x="21" y="734" width="663" height="35" fill="#654f27"/>
<polygon points="817.4,737.6 819.2,737.6 819.2,763.1 815.6,763.1 815.6,743.6 808.9,745.7 808.9,742.1" fill="#eab839"/>
<rect x="20" y="807" width="663" height="35" rx="2" fill="#232427"/>
<rect x="21" y="807" width="665" height="35" rx="2" fill="#5fc8e0"/>
<rect x="21" y="807" width="663" height="35" fill="#2f5560"/>
<polygon points="817.4,810.4 819.2,810.4 819.2,835.9 815.6,835.9 815.6,816.4 808.9,818.5 808.9,814.9" fill="#5fc8e0"/>
<rect x="21" y="896" width="662" height="40" rx="2" fill="#232427"/>
<rect x="21" y="896" width="266" height="40" rx="2" fill="#73bf69"/>
<rect x="21" y="896" width="263.8" height="40" fill="#33502f"/>
<polygon points="796.3,912.5 810,912.5 810,921 790.8,921" fill="#73bf69"/>
<line x1="893" y1="525.5" x2="1355" y2="525.5" stroke="#434447" stroke-width="1"/>
<line x1="893" y1="569.5" x2="1355" y2="569.5" stroke="#434447" stroke-width="1"/>
<line x1="893" y1="612.5" x2="1355" y2="612.5" stroke="#434447" stroke-width="1"/>
<line x1="893" y1="656.5" x2="1355" y2="656.5" stroke="#434447" stroke-width="1"/>
<line x1="893" y1="700.5" x2="1355" y2="700.5" stroke="#434447" stroke-width="1"/>
<line x1="937.5" y1="525" x2="937.5" y2="701" stroke="#434447" stroke-width="1"/>
<line x1="1014.5" y1="525" x2="1014.5" y2="701" stroke="#434447" stroke-width="1"/>
<line x1="1091.5" y1="525" x2="1091.5" y2="701" stroke="#434447" stroke-width="1"/>
<line x1="1168.5" y1="525" x2="1168.5" y2="701" stroke="#434447" stroke-width="1"/>
<line x1="1245.5" y1="525" x2="1245.5" y2="701" stroke="#434447" stroke-width="1"/>
<line x1="1322.5" y1="525" x2="1322.5" y2="701" stroke="#434447" stroke-width="1"/>
<rect x="893" y="569" width="462" height="131" fill="#73bf69" fill-opacity="0.1"/>
<rect x="893" y="690" width="462" height="10" fill="#eab839" fill-opacity="0.1"/>
<line x1="893" y1="569" x2="1355" y2="569" stroke="#73bf69" stroke-width="2"/>
<line x1="893" y1="690" x2="1355" y2="690" stroke="#eab839" stroke-width="2"/>
<rect x="872" y="737" width="14" height="3.8" fill="#73bf69"/>
<rect x="872" y="755" width="14" height="3.8" fill="#eab839"/>
<line x1="1432" y1="525.5" x2="1814" y2="525.5" stroke="#434447" stroke-width="1"/>
<line x1="1432" y1="569.5" x2="1814" y2="569.5" stroke="#434447" stroke-width="1"/>
<line x1="1432" y1="612.5" x2="1814" y2="612.5" stroke="#434447" stroke-width="1"/>
<line x1="1432" y1="656.5" x2="1814" y2="656.5" stroke="#434447" stroke-width="1"/>
<line x1="1432" y1="700.5" x2="1814" y2="700.5" stroke="#434447" stroke-width="1"/>
<line x1="1468.5" y1="525" x2="1468.5" y2="701" stroke="#434447" stroke-width="1"/>
<line x1="1532.5" y1="525" x2="1532.5" y2="701" stroke="#434447" stroke-width="1"/>
<line x1="1596.5" y1="525" x2="1596.5" y2="701" stroke="#434447" stroke-width="1"/>
<line x1="1659.5" y1="525" x2="1659.5" y2="701" stroke="#434447" stroke-width="1"/>
<line x1="1723.5" y1="525" x2="1723.5" y2="701" stroke="#434447" stroke-width="1"/>
<line x1="1786.5" y1="525" x2="1786.5" y2="701" stroke="#434447" stroke-width="1"/>
<line x1="1432" y1="700" x2="1814" y2="700" stroke="#eab839" stroke-width="2"/>
<rect x="1407" y="737" width="14" height="3.8" fill="#73bf69"/>
<rect x="1407" y="755" width="14" height="3.8" fill="#eab839"/>
<line x1="1397" y1="765.5" x2="1791" y2="765.5" stroke="#050506" stroke-width="1.5"/>
<line x1="895" y1="829.5" x2="1355" y2="829.5" stroke="#434447" stroke-width="1"/>
<line x1="895" y1="874.5" x2="1355" y2="874.5" stroke="#434447" stroke-width="1"/>
<line x1="895" y1="919.5" x2="1355" y2="919.5" stroke="#434447" stroke-width="1"/>
<line x1="937.5" y1="829" x2="937.5" y2="921" stroke="#434447" stroke-width="1"/>
<line x1="1014.5" y1="829" x2="1014.5" y2="921" stroke="#434447" stroke-width="1"/>
<line x1="1091.5" y1="829" x2="1091.5" y2="921" stroke="#434447" stroke-width="1"/>
<line x1="1168.5" y1="829" x2="1168.5" y2="921" stroke="#434447" stroke-width="1"/>
<line x1="1245.5" y1="829" x2="1245.5" y2="921" stroke="#434447" stroke-width="1"/>
<line x1="1322.5" y1="829" x2="1322.5" y2="921" stroke="#434447" stroke-width="1"/>
<path d="M895,841.4 L895,841.4 L895.3,845.8 L896.6,845.8 L896.9,841.4 L898.2,841.4 L898.5,845.8 L900.6,845.8 L900.9,841.4 L902.0,841.4 L902.3,845.8 L903.7,845.8 L904.0,841.4 L905.3,841.4 L905.6,845.8 L906.5,845.8 L906.8,841.4 L908.0,841.4 L908.3,845.8 L909.9,845.8 L910.2,841.4 L911.7,841.4 L912.0,845.8 L912.8,845.8 L913.1,841.4 L914.0,841.4 L914.3,845.8 L915.1,845.8 L915.4,841.4 L916.9,841.4 L917.2,845.8 L918.9,845.8 L919.2,841.4 L919.8,841.4 L920.1,845.8 L922.3,845.8 L922.6,841.4 L924.3,841.4 L924.6,845.8 L926.3,845.8 L926.6,841.4 L927.9,841.4 L928.2,845.8 L929.1,845.8 L929.4,841.4 L930.0,841.4 L930.3,845.8 L931.7,845.8 L932.0,841.4 L932.7,841.4 L933.0,845.8 L933.9,845.8 L934.2,841.4 L935.1,841.4 L935.4,845.8 L936.0,845.8 L936.3,841.4 L938.7,841.4 L938.7,845.8 L938.7,845.8 L946.6,845.8 L947.0,841.4 L948.0,841.4 L948.4,845.8 L949.1,845.8 L949.5,841.4 L950.5,841.4 L950.9,845.8 L951.6,845.8 L952.0,841.4 L953.0,841.4 L953.4,845.8 L954.1,845.8 L954.5,841.4 L955.5,841.4 L955.9,845.8 L957.1,845.8 L957.5,841.4 L958.5,841.4 L958.9,845.8 L1002.1,845.8 L1002.5,841.4 L1003.5,841.4 L1003.9,845.8 L1009.1,845.8 L1009.5,841.4 L1010.5,841.4 L1010.9,845.8 L1029.1,845.8 L1029.5,841.4 L1030.5,841.4 L1030.9,845.8 L1034.1,845.8 L1034.5,841.4 L1035.5,841.4 L1035.9,845.8 L1040.1,845.8 L1040.5,841.4 L1041.5,841.4 L1041.9,845.8 L1058.1,845.8 L1058.5,841.4 L1059.5,841.4 L1059.9,845.8 L1060.6,845.8 L1061.0,841.4 L1062.0,841.4 L1062.4,845.8 L1063.1,845.8 L1063.5,841.4 L1064.5,841.4 L1064.9,845.8 L1072.1,845.8 L1072.5,841.4 L1073.5,841.4 L1073.9,845.8 L1080.1,845.8 L1080.5,841.4 L1081.5,841.4 L1081.9,845.8 L1082.6,845.8 L1083.0,841.4 L1084.0,841.4 L1084.4,845.8 L1125.6,845.8 L1126.0,841.4 L1127.0,841.4 L1127.4,845.8 L1151.3,845.8 L1151.7,841.4 L1152.7,841.4 L1153.1000000000001,845.8 L1199.5,845.8 L1199.5,850.2 L1205,850.2 L1205,850.2 L1205,850.2 L1205.3,845.8 L1206.3,845.8 L1206.6,850.2 L1207.8,850.2 L1208.1,845.8 L1209.2,845.8 L1209.5,850.2 L1210.6,850.2 L1210.9,845.8 L1212.0,845.8 L1212.3,850.2 L1213.3,850.2 L1213.6,845.8 L1214.7,845.8 L1215.0,850.2 L1215.8,850.2 L1216.1,845.8 L1217.7,845.8 L1218.0,850.2 L1219.2,850.2 L1219.5,845.8 L1221.0,845.8 L1221.3,850.2 L1223,850.2 L1223,850.2 L1241.5,850.2 L1242.5,845.8 L1252.5,845.8 L1253.5,841.4 L1262.1,841.4 L1262.5,845.8 L1263.5,845.8 L1263.9,841.4 L1281.7,841.4 L1282.5,845.8 L1287.5,845.8 L1288.5,850.2 L1288.6,850.2 L1289.0,845.8 L1290.0,845.8 L1290.4,850.2 L1294.1,850.2 L1294.5,845.8 L1295.5,845.8 L1295.9,850.2 L1296.1,850.2 L1296.5,845.8 L1297.5,845.8 L1297.9,850.2 L1298.6,850.2 L1299.0,845.8 L1300.0,845.8 L1300.4,850.2 L1309.1,850.2 L1309.5,845.8 L1310.5,845.8 L1310.9,850.2 L1311.6,850.2 L1312.0,845.8 L1313.0,845.8 L1313.4,850.2 L1314.1,850.2 L1314.5,845.8 L1315.5,845.8 L1315.9,850.2 L1316.1,850.2 L1316.5,845.8 L1317.5,845.8 L1317.9,850.2 L1319.1,850.2 L1319.5,845.8 L1320.5,845.8 L1320.9,850.2 L1321.6,850.2 L1322.0,845.8 L1323.0,845.8 L1323.4,850.2 L1329.1,850.2 L1329.5,845.8 L1330.5,845.8 L1330.9,850.2 L1337.1,850.2 L1337.5,845.8 L1338.5,845.8 L1338.9,850.2 L1339.1,850.2 L1339.5,845.8 L1340.5,845.8 L1340.9,850.2 L1342.1,850.2 L1342.5,845.8 L1343.5,845.8 L1343.9,850.2 L1344.1,850.2 L1344.5,845.8 L1345.5,845.8 L1345.9,850.2 L1346.1,850.2 L1346.5,845.8 L1347.5,845.8 L1347.9,850.2 L1355,850.2 L1355,921 L895,921 Z" fill="#eab839" fill-opacity="0.1"/>
<path d="M895,841.4 L895,841.4 L895.3,845.8 L896.6,845.8 L896.9,841.4 L898.2,841.4 L898.5,845.8 L900.6,845.8 L900.9,841.4 L902.0,841.4 L902.3,845.8 L903.7,845.8 L904.0,841.4 L905.3,841.4 L905.6,845.8 L906.5,845.8 L906.8,841.4 L908.0,841.4 L908.3,845.8 L909.9,845.8 L910.2,841.4 L911.7,841.4 L912.0,845.8 L912.8,845.8 L913.1,841.4 L914.0,841.4 L914.3,845.8 L915.1,845.8 L915.4,841.4 L916.9,841.4 L917.2,845.8 L918.9,845.8 L919.2,841.4 L919.8,841.4 L920.1,845.8 L922.3,845.8 L922.6,841.4 L924.3,841.4 L924.6,845.8 L926.3,845.8 L926.6,841.4 L927.9,841.4 L928.2,845.8 L929.1,845.8 L929.4,841.4 L930.0,841.4 L930.3,845.8 L931.7,845.8 L932.0,841.4 L932.7,841.4 L933.0,845.8 L933.9,845.8 L934.2,841.4 L935.1,841.4 L935.4,845.8 L936.0,845.8 L936.3,841.4 L938.7,841.4 L938.7,845.8 L938.7,845.8 L946.6,845.8 L947.0,841.4 L948.0,841.4 L948.4,845.8 L949.1,845.8 L949.5,841.4 L950.5,841.4 L950.9,845.8 L951.6,845.8 L952.0,841.4 L953.0,841.4 L953.4,845.8 L954.1,845.8 L954.5,841.4 L955.5,841.4 L955.9,845.8 L957.1,845.8 L957.5,841.4 L958.5,841.4 L958.9,845.8 L1002.1,845.8 L1002.5,841.4 L1003.5,841.4 L1003.9,845.8 L1009.1,845.8 L1009.5,841.4 L1010.5,841.4 L1010.9,845.8 L1029.1,845.8 L1029.5,841.4 L1030.5,841.4 L1030.9,845.8 L1034.1,845.8 L1034.5,841.4 L1035.5,841.4 L1035.9,845.8 L1040.1,845.8 L1040.5,841.4 L1041.5,841.4 L1041.9,845.8 L1058.1,845.8 L1058.5,841.4 L1059.5,841.4 L1059.9,845.8 L1060.6,845.8 L1061.0,841.4 L1062.0,841.4 L1062.4,845.8 L1063.1,845.8 L1063.5,841.4 L1064.5,841.4 L1064.9,845.8 L1072.1,845.8 L1072.5,841.4 L1073.5,841.4 L1073.9,845.8 L1080.1,845.8 L1080.5,841.4 L1081.5,841.4 L1081.9,845.8 L1082.6,845.8 L1083.0,841.4 L1084.0,841.4 L1084.4,845.8 L1125.6,845.8 L1126.0,841.4 L1127.0,841.4 L1127.4,845.8 L1151.3,845.8 L1151.7,841.4 L1152.7,841.4 L1153.1000000000001,845.8 L1199.5,845.8 L1199.5,850.2 L1205,850.2 L1205,850.2 L1205,850.2 L1205.3,845.8 L1206.3,845.8 L1206.6,850.2 L1207.8,850.2 L1208.1,845.8 L1209.2,845.8 L1209.5,850.2 L1210.6,850.2 L1210.9,845.8 L1212.0,845.8 L1212.3,850.2 L1213.3,850.2 L1213.6,845.8 L1214.7,845.8 L1215.0,850.2 L1215.8,850.2 L1216.1,845.8 L1217.7,845.8 L1218.0,850.2 L1219.2,850.2 L1219.5,845.8 L1221.0,845.8 L1221.3,850.2 L1223,850.2 L1223,850.2 L1241.5,850.2 L1242.5,845.8 L1252.5,845.8 L1253.5,841.4 L1262.1,841.4 L1262.5,845.8 L1263.5,845.8 L1263.9,841.4 L1281.7,841.4 L1282.5,845.8 L1287.5,845.8 L1288.5,850.2 L1288.6,850.2 L1289.0,845.8 L1290.0,845.8 L1290.4,850.2 L1294.1,850.2 L1294.5,845.8 L1295.5,845.8 L1295.9,850.2 L1296.1,850.2 L1296.5,845.8 L1297.5,845.8 L1297.9,850.2 L1298.6,850.2 L1299.0,845.8 L1300.0,845.8 L1300.4,850.2 L1309.1,850.2 L1309.5,845.8 L1310.5,845.8 L1310.9,850.2 L1311.6,850.2 L1312.0,845.8 L1313.0,845.8 L1313.4,850.2 L1314.1,850.2 L1314.5,845.8 L1315.5,845.8 L1315.9,850.2 L1316.1,850.2 L1316.5,845.8 L1317.5,845.8 L1317.9,850.2 L1319.1,850.2 L1319.5,845.8 L1320.5,845.8 L1320.9,850.2 L1321.6,850.2 L1322.0,845.8 L1323.0,845.8 L1323.4,850.2 L1329.1,850.2 L1329.5,845.8 L1330.5,845.8 L1330.9,850.2 L1337.1,850.2 L1337.5,845.8 L1338.5,845.8 L1338.9,850.2 L1339.1,850.2 L1339.5,845.8 L1340.5,845.8 L1340.9,850.2 L1342.1,850.2 L1342.5,845.8 L1343.5,845.8 L1343.9,850.2 L1344.1,850.2 L1344.5,845.8 L1345.5,845.8 L1345.9,850.2 L1346.1,850.2 L1346.5,845.8 L1347.5,845.8 L1347.9,850.2 L1355,850.2" fill="none" stroke="#eab839" stroke-width="1.8" stroke-linejoin="bevel"/>
<line x1="1450" y1="829.5" x2="1814" y2="829.5" stroke="#434447" stroke-width="1"/>
<line x1="1450" y1="863.5" x2="1814" y2="863.5" stroke="#434447" stroke-width="1"/>
<line x1="1450" y1="897.5" x2="1814" y2="897.5" stroke="#434447" stroke-width="1"/>
<line x1="1484.5" y1="829" x2="1484.5" y2="921" stroke="#434447" stroke-width="1"/>
<line x1="1545.5" y1="829" x2="1545.5" y2="921" stroke="#434447" stroke-width="1"/>
<line x1="1606.5" y1="829" x2="1606.5" y2="921" stroke="#434447" stroke-width="1"/>
<line x1="1666.5" y1="829" x2="1666.5" y2="921" stroke="#434447" stroke-width="1"/>
<line x1="1727.5" y1="829" x2="1727.5" y2="921" stroke="#434447" stroke-width="1"/>
<line x1="1788.5" y1="829" x2="1788.5" y2="921" stroke="#434447" stroke-width="1"/>
<rect x="1450" y="902" width="364" height="19" fill="#73bf69" fill-opacity="0.1"/>
<rect x="1450" y="902" width="364" height="19" fill="#eab839" fill-opacity="0.1"/>
<line x1="1450" y1="902.5" x2="1814" y2="902.5" stroke="#eab839" stroke-width="2"/>
<circle cx="1829.5" cy="271.5" r="1.1" fill="#f0f0f0"/>
<circle cx="843.5" cy="469.5" r="1.1" fill="#f0f0f0"/>
<circle cx="1837.5" cy="469.5" r="1.1" fill="#f0f0f0"/>
<circle cx="1370.5" cy="765.5" r="1.1" fill="#f0f0f0"/>
<circle cx="1829.5" cy="765.5" r="1.1" fill="#f0f0f0"/></svg>
<div style="position:absolute;left:0;top:0;width:1848px;height:921px;will-change:transform">
<div class="t" style="left:38px;top:-2px;height:36px;line-height:36px;font-size:18px;color:#d8d9da;font-weight:400;-webkit-text-stroke:0.4px currentColor;letter-spacing:-0.45px;">General</div>
<div class="t" style="left:108.3px;top:-2.5px;height:37.0px;line-height:37.0px;font-size:18.5px;color:#d8d9da;font-weight:400;-webkit-text-stroke:0.4px currentColor;">/</div>
<div class="t" style="left:129px;top:-2px;height:36px;line-height:36px;font-size:18px;color:#d8d9da;font-weight:400;-webkit-text-stroke:0.4px currentColor;letter-spacing:-0.05px;">hami vgpu Dashboard</div>
<div class="t" style="left:1560.2px;top:1px;height:28px;line-height:28px;font-size:14px;color:#86898e;font-weight:700;letter-spacing:-0.4px">Last 12 hours</div>
<div class="t" style="left:20.8px;top:59px;height:24px;line-height:24px;font-size:12px;color:#33a2e5;font-weight:400;-webkit-text-stroke:0.5px currentColor;letter-spacing:-0.25px;">node_name</div>
<div class="t" style="left:105px;top:57px;height:28px;line-height:28px;font-size:14px;color:#d8d9da;font-weight:400;-webkit-text-stroke:0.4px currentColor;">All</div>
<div class="t" style="left:170.3px;top:59px;height:24px;line-height:24px;font-size:12px;color:#33a2e5;font-weight:400;-webkit-text-stroke:0.5px currentColor;letter-spacing:-0.2px;">uuid</div>
<div class="t" style="left:215px;top:57px;height:28px;line-height:28px;font-size:14px;color:#d8d9da;font-weight:400;-webkit-text-stroke:0.4px currentColor;">All</div>
<div class="t" style="left:-277.5px;width:800px;text-align:center;top:100px;height:28px;line-height:28px;font-size:14px;color:#d0d3d8;font-weight:700;letter-spacing:-0.4px;">GPU Total</div>
<div class="t" style="left:-86.5px;width:800px;text-align:center;top:100px;height:28px;line-height:28px;font-size:14px;color:#d0d3d8;font-weight:700;letter-spacing:-0.4px;">XID Error</div>
<div class="t" style="left:104.5px;width:800px;text-align:center;top:100px;height:28px;line-height:28px;font-size:14px;color:#d0d3d8;font-weight:700;letter-spacing:-0.4px;">GPU Temp</div>
<div class="t" style="left:334.5px;width:800px;text-align:center;top:100px;height:28px;line-height:28px;font-size:14px;color:#d0d3d8;font-weight:700;letter-spacing:-0.4px;">GPU power usage</div>
<div class="t" style="left:946.0px;width:800px;text-align:center;top:100px;height:28px;line-height:28px;font-size:14px;color:#d0d3d8;font-weight:700;letter-spacing:-0.4px;">GPU temp(DCGM)</div>
<div class="t" style="left:28.5px;width:800px;text-align:center;top:290px;height:28px;line-height:28px;font-size:14px;color:#d0d3d8;font-weight:700;letter-spacing:-0.4px;">nodeGPUOverview</div>
<div class="t" style="left:946.0px;width:800px;text-align:center;top:290px;height:28px;line-height:28px;font-size:14px;color:#d0d3d8;font-weight:700;letter-spacing:-0.4px;">nodeGPUList(DCGM)</div>
<div class="t" style="left:28.5px;width:800px;text-align:center;top:480px;height:28px;line-height:28px;font-size:14px;color:#d0d3d8;font-weight:700;letter-spacing:-0.4px;">vGPUCorePercentage</div>
<div class="t" style="left:716.5px;width:800px;text-align:center;top:480px;height:28px;line-height:28px;font-size:14px;color:#d0d3d8;font-weight:700;letter-spacing:-0.4px;">GPU FB used(DCGM)</div>
<div class="t" style="left:1213.5px;width:800px;text-align:center;top:480px;height:28px;line-height:28px;font-size:14px;color:#d0d3d8;font-weight:700;letter-spacing:-0.4px;">GPU util(DCGM)</div>
<div class="t" style="left:28.5px;width:800px;text-align:center;top:670px;height:28px;line-height:28px;font-size:14px;color:#d0d3d8;font-weight:700;letter-spacing:-0.4px;">vGPUMemoryPercentage</div>
<div class="t" style="left:28.5px;width:800px;text-align:center;top:860px;height:28px;line-height:28px;font-size:14px;color:#d0d3d8;font-weight:700;letter-spacing:-0.4px;">vgpu used by nodes</div>
<div class="t" style="left:716.5px;width:800px;text-align:center;top:784px;height:28px;line-height:28px;font-size:14px;color:#d0d3d8;font-weight:700;letter-spacing:-0.4px;">GPU power usage(DCGM)</div>
<div class="t" style="left:1213.5px;width:800px;text-align:center;top:784px;height:28px;line-height:28px;font-size:14px;color:#d0d3d8;font-weight:700;letter-spacing:-0.4px;">GPU SM Clock(DCGM)</div>
<div class="t" style="left:-277.5px;width:800px;text-align:center;top:139.3px;height:126px;line-height:126px;font-size:63px;color:#73bf69;font-weight:400;transform:scaleX(1.06);-webkit-text-stroke:1.1px currentColor;">2</div>
<div class="t" style="left:-86.5px;width:800px;text-align:center;top:139.3px;height:126px;line-height:126px;font-size:63px;color:#73bf69;font-weight:400;-webkit-text-stroke:1.1px currentColor;">0</div>
<div class="t" style="left:104.5px;width:800px;text-align:center;top:217px;height:52px;line-height:52px;font-size:26px;color:#73bf69;font-weight:700;">61.0 °C</div>
<div class="t" style="left:334.5px;width:800px;text-align:center;top:217px;height:52px;line-height:52px;font-size:26px;color:#f2495c;font-weight:700;letter-spacing:-0.9px;">22.0 kW</div>
<div class="t" style="left:90.5px;width:800px;text-align:right;top:132.0px;height:24px;line-height:24px;font-size:12px;color:#c7d0d9;font-weight:400;letter-spacing:-0.3px;-webkit-text-stroke:0.2px currentColor;">63 °C</div>
<div class="t" style="left:90.5px;width:800px;text-align:right;top:158.0px;height:24px;line-height:24px;font-size:12px;color:#c7d0d9;font-weight:400;letter-spacing:-0.3px;-webkit-text-stroke:0.2px currentColor;">62 °C</div>
<div class="t" style="left:90.5px;width:800px;text-align:right;top:184.0px;height:24px;line-height:24px;font-size:12px;color:#c7d0d9;font-weight:400;letter-spacing:-0.3px;-webkit-text-stroke:0.2px currentColor;">61 °C</div>
<div class="t" style="left:90.5px;width:800px;text-align:right;top:210.0px;height:24px;line-height:24px;font-size:12px;color:#c7d0d9;font-weight:400;letter-spacing:-0.3px;-webkit-text-stroke:0.2px currentColor;">60 °C</div>
<div class="t" style="left:90.5px;width:800px;text-align:right;top:236.0px;height:24px;line-height:24px;font-size:12px;color:#c7d0d9;font-weight:400;letter-spacing:-0.3px;-webkit-text-stroke:0.2px currentColor;">59 °C</div>
<div class="t" style="left:505.5px;width:800px;text-align:center;top:251px;height:24px;line-height:24px;font-size:12px;color:#c7d0d9;font-weight:400;letter-spacing:-0.3px;-webkit-text-stroke:0.2px currentColor;">03:00</div>
<div class="t" style="left:569.5px;width:800px;text-align:center;top:251px;height:24px;line-height:24px;font-size:12px;color:#c7d0d9;font-weight:400;letter-spacing:-0.3px;-webkit-text-stroke:0.2px currentColor;">04:00</div>
<div class="t" style="left:633.5px;width:800px;text-align:center;top:251px;height:24px;line-height:24px;font-size:12px;color:#c7d0d9;font-weight:400;letter-spacing:-0.3px;-webkit-text-stroke:0.2px currentColor;">05:00</div>
<div class="t" style="left:697.5px;width:800px;text-align:center;top:251px;height:24px;line-height:24px;font-size:12px;color:#c7d0d9;font-weight:400;letter-spacing:-0.3px;-webkit-text-stroke:0.2px currentColor;">06:00</div>
<div class="t" style="left:760.5px;width:800px;text-align:center;top:251px;height:24px;line-height:24px;font-size:12px;color:#c7d0d9;font-weight:400;letter-spacing:-0.3px;-webkit-text-stroke:0.2px currentColor;">07:00</div>
<div class="t" style="left:824.5px;width:800px;text-align:center;top:251px;height:24px;line-height:24px;font-size:12px;color:#c7d0d9;font-weight:400;letter-spacing:-0.3px;-webkit-text-stroke:0.2px currentColor;">08:00</div>
<div class="t" style="left:888.5px;width:800px;text-align:center;top:251px;height:24px;line-height:24px;font-size:12px;color:#c7d0d9;font-weight:400;letter-spacing:-0.3px;-webkit-text-stroke:0.2px currentColor;">09:00</div>
<div class="t" style="left:952.5px;width:800px;text-align:center;top:251px;height:24px;line-height:24px;font-size:12px;color:#c7d0d9;font-weight:400;letter-spacing:-0.3px;-webkit-text-stroke:0.2px currentColor;">10:00</div>
<div class="t" style="left:1016.5px;width:800px;text-align:center;top:251px;height:24px;line-height:24px;font-size:12px;color:#c7d0d9;font-weight:400;letter-spacing:-0.3px;-webkit-text-stroke:0.2px currentColor;">11:00</div>
<div class="t" style="left:1080.5px;width:800px;text-align:center;top:251px;height:24px;line-height:24px;font-size:12px;color:#c7d0d9;font-weight:400;letter-spacing:-0.3px;-webkit-text-stroke:0.2px currentColor;">12:00</div>
<div class="t" style="left:1144.5px;width:800px;text-align:center;top:251px;height:24px;line-height:24px;font-size:12px;color:#c7d0d9;font-weight:400;letter-spacing:-0.3px;-webkit-text-stroke:0.2px currentColor;">13:00</div>
<div class="t" style="left:1208.5px;width:800px;text-align:center;top:251px;height:24px;line-height:24px;font-size:12px;color:#c7d0d9;font-weight:400;letter-spacing:-0.3px;-webkit-text-stroke:0.2px currentColor;">14:00</div>
<div class="t" style="left:1705px;top:141px;height:24px;line-height:24px;font-size:12px;color:#c7d0d9;font-weight:400;letter-spacing:-0.08px;-webkit-text-stroke:0.15px currentColor;">telecom-k8s-phy02 uid:</div>
<div class="t" style="left:1705px;top:162px;height:24px;line-height:24px;font-size:12px;color:#c7d0d9;font-weight:400;letter-spacing:-0.08px;-webkit-text-stroke:0.15px currentColor;">telecom-k8s-phy02 uid:</div>
<div class="a" style="left:19px;top:318px;width:149.6px;height:33px;overflow:hidden"><div class="t" style="left:0px;top:2px;height:28px;line-height:28px;font-size:14px;color:#33a2e5;font-weight:400;-webkit-text-stroke:0.25px currentColor;">nodeid</div></div>
<div class="a" style="left:185px;top:318px;width:149.6px;height:33px;overflow:hidden"><div class="t" style="left:0px;top:2px;height:28px;line-height:28px;font-size:14px;color:#33a2e5;font-weight:400;-webkit-text-stroke:0.25px currentColor;">devicetype</div></div>
<div class="a" style="left:351px;top:318px;width:149.6px;height:33px;overflow:hidden"><div class="t" style="left:0px;top:2px;height:28px;line-height:28px;font-size:14px;color:#33a2e5;font-weight:400;-webkit-text-stroke:0.25px currentColor;">vram</div></div>
<div class="a" style="left:518px;top:318px;width:149.6px;height:33px;overflow:hidden"><div class="t" style="left:0px;top:2px;height:28px;line-height:28px;font-size:14px;color:#33a2e5;font-weight:400;-webkit-text-stroke:0.25px currentColor;">deviceuuid</div></div>
<div class="a" style="left:684px;top:318px;width:149.6px;height:33px;overflow:hidden"><div class="t" style="left:0px;top:2px;height:28px;line-height:28px;font-size:14px;color:#33a2e5;font-weight:400;-webkit-text-stroke:0.25px currentColor;">sharedcontainers</div></div>
<div class="t" style="left:19px;top:354px;height:28px;line-height:28px;font-size:14px;color:#c7d0d9;font-weight:400;-webkit-text-stroke:0.25px currentColor;">telecom-k8s-phy02</div>
<div class="t" style="left:185px;top:354px;height:28px;line-height:28px;font-size:14px;color:#c7d0d9;font-weight:400;-webkit-text-stroke:0.25px currentColor;">NVIDIA-Tesla T4</div>
<div class="t" style="left:351px;top:354px;height:28px;line-height:28px;font-size:14px;color:#c7d0d9;font-weight:400;-webkit-text-stroke:0.25px currentColor;">15360</div>
<div class="t" style="left:518px;top:354px;height:28px;line-height:28px;font-size:14px;color:#c7d0d9;font-weight:400;-webkit-text-stroke:0.25px currentColor;letter-spacing:-0.25px;">GPU-3dfd5296-9b64-6...</div>
<div class="t" style="left:684px;top:354px;height:28px;line-height:28px;font-size:14px;color:#c7d0d9;font-weight:400;-webkit-text-stroke:0.25px currentColor;">2</div>
<div class="t" style="left:19px;top:389px;height:28px;line-height:28px;font-size:14px;color:#c7d0d9;font-weight:400;-webkit-text-stroke:0.25px currentColor;">telecom-k8s-phy02</div>
<div class="t" style="left:185px;top:389px;height:28px;line-height:28px;font-size:14px;color:#c7d0d9;font-weight:400;-webkit-text-stroke:0.25px currentColor;">NVIDIA-Tesla T4</div>
<div class="t" style="left:351px;top:389px;height:28px;line-height:28px;font-size:14px;color:#c7d0d9;font-weight:400;-webkit-text-stroke:0.25px currentColor;">15360</div>
<div class="t" style="left:518px;top:389px;height:28px;line-height:28px;font-size:14px;color:#c7d0d9;font-weight:400;-webkit-text-stroke:0.25px currentColor;letter-spacing:-0.25px;">GPU-d604802e-7bb4-f...</div>
<div class="t" style="left:684px;top:389px;height:28px;line-height:28px;font-size:14px;color:#c7d0d9;font-weight:400;-webkit-text-stroke:0.25px currentColor;">2</div>
<div class="a" style="left:860px;top:318px;width:180.2px;height:33px;overflow:hidden"><div class="t" style="left:0px;top:2px;height:28px;line-height:28px;font-size:14px;color:#33a2e5;font-weight:400;-webkit-text-stroke:0.25px currentColor;">node_name</div></div>
<div class="a" style="left:1056px;top:318px;width:180.2px;height:33px;overflow:hidden"><div class="t" style="left:0px;top:2px;height:28px;line-height:28px;font-size:14px;color:#33a2e5;font-weight:400;-webkit-text-stroke:0.25px currentColor;">modelName</div></div>
<div class="a" style="left:1253px;top:318px;width:180.2px;height:33px;overflow:hidden"><div class="t" style="left:0px;top:2px;height:28px;line-height:28px;font-size:14px;color:#33a2e5;font-weight:400;-webkit-text-stroke:0.25px currentColor;letter-spacing:-0.9px;">DCGM_FI_CUDA_DRIVER_VEI</div></div>
<div class="a" style="left:1451px;top:318px;width:180.2px;height:33px;overflow:hidden"><div class="t" style="left:0px;top:2px;height:28px;line-height:28px;font-size:14px;color:#33a2e5;font-weight:400;-webkit-text-stroke:0.25px currentColor;letter-spacing:-0.9px;">DCGM_FI_DRIVER_VERSION</div></div>
<div class="a" style="left:1648px;top:318px;width:180.2px;height:33px;overflow:hidden"><div class="t" style="left:0px;top:2px;height:28px;line-height:28px;font-size:14px;color:#33a2e5;font-weight:400;-webkit-text-stroke:0.25px currentColor;">UUID</div></div>
<div class="t" style="left:860px;top:354px;height:28px;line-height:28px;font-size:14px;color:#c7d0d9;font-weight:400;-webkit-text-stroke:0.25px currentColor;">telecom-k8s-phy02</div>
<div class="t" style="left:1056px;top:354px;height:28px;line-height:28px;font-size:14px;color:#c7d0d9;font-weight:400;-webkit-text-stroke:0.25px currentColor;">Tesla T4</div>
<div class="t" style="left:1253px;top:354px;height:28px;line-height:28px;font-size:14px;color:#c7d0d9;font-weight:400;-webkit-text-stroke:0.25px currentColor;">12030</div>
<div class="t" style="left:1451px;top:354px;height:28px;line-height:28px;font-size:14px;color:#c7d0d9;font-weight:400;-webkit-text-stroke:0.25px currentColor;">535.129.03</div>
<div class="t" style="left:1648px;top:354px;height:28px;line-height:28px;font-size:14px;color:#c7d0d9;font-weight:400;-webkit-text-stroke:0.25px currentColor;letter-spacing:-0.25px;">GPU-3dfd5296-9b64-6508...</div>
<div class="t" style="left:860px;top:389px;height:28px;line-height:28px;font-size:14px;color:#c7d0d9;font-weight:400;-webkit-text-stroke:0.25px currentColor;">telecom-k8s-phy02</div>
<div class="t" style="left:1056px;top:389px;height:28px;line-height:28px;font-size:14px;color:#c7d0d9;font-weight:400;-webkit-text-stroke:0.25px currentColor;">Tesla T4</div>
<div class="t" style="left:1253px;top:389px;height:28px;line-height:28px;font-size:14px;color:#c7d0d9;font-weight:400;-webkit-text-stroke:0.25px currentColor;">12030</div>
<div class="t" style="left:1451px;top:389px;height:28px;line-height:28px;font-size:14px;color:#c7d0d9;font-weight:400;-webkit-text-stroke:0.25px currentColor;">535.129.03</div>
<div class="t" style="left:1648px;top:389px;height:28px;line-height:28px;font-size:14px;color:#c7d0d9;font-weight:400;-webkit-text-stroke:0.25px currentColor;letter-spacing:-0.25px;">GPU-d604802e-7bb4-f34f-...</div>
<div class="t" style="left:21px;top:510.0px;height:39.0px;line-height:39.0px;font-size:19.5px;color:#c7d0d9;font-weight:400;letter-spacing:-0.4px;-webkit-text-stroke:0.15px currentColor;">telecom-k8s-phy02:GPU-3dfd5296-9b64-6508-c1cf-db768a3480bb</div>
<div class="t" style="left:416px;width:800px;text-align:center;top:523.9px;height:73.0px;line-height:73.0px;font-size:36.5px;color:#73bf69;font-weight:400;-webkit-text-stroke:0.6px currentColor;">0</div>
<div class="t" style="left:21px;top:583.0px;height:39.0px;line-height:39.0px;font-size:19.5px;color:#c7d0d9;font-weight:400;letter-spacing:-0.4px;-webkit-text-stroke:0.15px currentColor;">telecom-k8s-phy02:GPU-d604802e-7bb4-f34f-4799-4076d2fa1815</div>
<div class="t" style="left:416px;width:800px;text-align:center;top:596.9px;height:73.0px;line-height:73.0px;font-size:36.5px;color:#73bf69;font-weight:400;-webkit-text-stroke:0.6px currentColor;">0</div>
<div class="t" style="left:21px;top:700.0px;height:39.0px;line-height:39.0px;font-size:19.5px;color:#c7d0d9;font-weight:400;letter-spacing:-0.4px;-webkit-text-stroke:0.15px currentColor;">telecom-k8s-phy02:GPU-3dfd5296-9b64-6508-c1cf-db768a3480bb</div>
<div class="t" style="left:21px;top:773.0px;height:39.0px;line-height:39.0px;font-size:19.5px;color:#c7d0d9;font-weight:400;letter-spacing:-0.4px;-webkit-text-stroke:0.15px currentColor;">telecom-k8s-phy02:GPU-d604802e-7bb4-f34f-4799-4076d2fa1815</div>
<div class="t" style="left:87.5px;width:800px;text-align:right;top:512.7px;height:24px;line-height:24px;font-size:12px;color:#c7d0d9;font-weight:400;letter-spacing:-0.3px;-webkit-text-stroke:0.2px currentColor;">6 GB</div>
<div class="t" style="left:87.5px;width:800px;text-align:right;top:556.7px;height:24px;line-height:24px;font-size:12px;color:#c7d0d9;font-weight:400;letter-spacing:-0.3px;-webkit-text-stroke:0.2px currentColor;">5 GB</div>
<div class="t" style="left:87.5px;width:800px;text-align:right;top:599.7px;height:24px;line-height:24px;font-size:12px;color:#c7d0d9;font-weight:400;letter-spacing:-0.3px;-webkit-text-stroke:0.2px currentColor;">4 GB</div>
<div class="t" style="left:87.5px;width:800px;text-align:right;top:643.7px;height:24px;line-height:24px;font-size:12px;color:#c7d0d9;font-weight:400;letter-spacing:-0.3px;-webkit-text-stroke:0.2px currentColor;">3 GB</div>
<div class="t" style="left:87.5px;width:800px;text-align:right;top:687.7px;height:24px;line-height:24px;font-size:12px;color:#c7d0d9;font-weight:400;letter-spacing:-0.3px;-webkit-text-stroke:0.2px currentColor;">2 GB</div>
<div class="t" style="left:537.5px;width:800px;text-align:center;top:702px;height:24px;line-height:24px;font-size:12px;color:#c7d0d9;font-weight:400;letter-spacing:-0.3px;-webkit-text-stroke:0.2px currentColor;">04:00</div>
<div class="t" style="left:614.5px;width:800px;text-align:center;top:702px;height:24px;line-height:24px;font-size:12px;color:#c7d0d9;font-weight:400;letter-spacing:-0.3px;-webkit-text-stroke:0.2px currentColor;">06:00</div>
<div class="t" style="left:691.5px;width:800px;text-align:center;top:702px;height:24px;line-height:24px;font-size:12px;color:#c7d0d9;font-weight:400;letter-spacing:-0.3px;-webkit-text-stroke:0.2px currentColor;">08:00</div>
<div class="t" style="left:768.5px;width:800px;text-align:center;top:702px;height:24px;line-height:24px;font-size:12px;color:#c7d0d9;font-weight:400;letter-spacing:-0.3px;-webkit-text-stroke:0.2px currentColor;">10:00</div>
<div class="t" style="left:845.5px;width:800px;text-align:center;top:702px;height:24px;line-height:24px;font-size:12px;color:#c7d0d9;font-weight:400;letter-spacing:-0.3px;-webkit-text-stroke:0.2px currentColor;">12:00</div>
<div class="t" style="left:922.5px;width:800px;text-align:center;top:702px;height:24px;line-height:24px;font-size:12px;color:#c7d0d9;font-weight:400;letter-spacing:-0.3px;-webkit-text-stroke:0.2px currentColor;">14:00</div>
<div class="t" style="left:894px;top:726px;height:24px;line-height:24px;font-size:12px;color:#c7d0d9;font-weight:400;letter-spacing:-0.08px;-webkit-text-stroke:0.15px currentColor;">telecom-k8s-phy02 uid:GPU-3dfd5296-9b64-6508-c1cf-db768a3480bb&nbsp; Current: 4.99 GB</div>
<div class="t" style="left:894px;top:744px;height:24px;line-height:24px;font-size:12px;color:#c7d0d9;font-weight:400;letter-spacing:-0.08px;-webkit-text-stroke:0.15px currentColor;">telecom-k8s-phy02 uid:GPU-d604802e-7bb4-f34f-4799-4076d2fa1815&nbsp; Current: 2.23 GB</div>
<div class="t" style="left:626px;width:800px;text-align:right;top:512.7px;height:24px;line-height:24px;font-size:12px;color:#c7d0d9;font-weight:400;letter-spacing:-0.3px;-webkit-text-stroke:0.2px currentColor;">100%</div>
<div class="t" style="left:626px;width:800px;text-align:right;top:556.7px;height:24px;line-height:24px;font-size:12px;color:#c7d0d9;font-weight:400;letter-spacing:-0.3px;-webkit-text-stroke:0.2px currentColor;">75%</div>
<div class="t" style="left:626px;width:800px;text-align:right;top:599.7px;height:24px;line-height:24px;font-size:12px;color:#c7d0d9;font-weight:400;letter-spacing:-0.3px;-webkit-text-stroke:0.2px currentColor;">50%</div>
<div class="t" style="left:626px;width:800px;text-align:right;top:643.7px;height:24px;line-height:24px;font-size:12px;color:#c7d0d9;font-weight:400;letter-spacing:-0.3px;-webkit-text-stroke:0.2px currentColor;">25%</div>
<div class="t" style="left:626px;width:800px;text-align:right;top:687.7px;height:24px;line-height:24px;font-size:12px;color:#c7d0d9;font-weight:400;letter-spacing:-0.3px;-webkit-text-stroke:0.2px currentColor;">0%</div>
<div class="t" style="left:1068.5px;width:800px;text-align:center;top:702px;height:24px;line-height:24px;font-size:12px;color:#c7d0d9;font-weight:400;letter-spacing:-0.3px;-webkit-text-stroke:0.2px currentColor;">04:00</div>
<div class="t" style="left:1132.5px;width:800px;text-align:center;top:702px;height:24px;line-height:24px;font-size:12px;color:#c7d0d9;font-weight:400;letter-spacing:-0.3px;-webkit-text-stroke:0.2px currentColor;">06:00</div>
<div class="t" style="left:1196.5px;width:800px;text-align:center;top:702px;height:24px;line-height:24px;font-size:12px;color:#c7d0d9;font-weight:400;letter-spacing:-0.3px;-webkit-text-stroke:0.2px currentColor;">08:00</div>
<div class="t" style="left:1259.5px;width:800px;text-align:center;top:702px;height:24px;line-height:24px;font-size:12px;color:#c7d0d9;font-weight:400;letter-spacing:-0.3px;-webkit-text-stroke:0.2px currentColor;">10:00</div>
<div class="t" style="left:1323.5px;width:800px;text-align:center;top:702px;height:24px;line-height:24px;font-size:12px;color:#c7d0d9;font-weight:400;letter-spacing:-0.3px;-webkit-text-stroke:0.2px currentColor;">12:00</div>
<div class="t" style="left:1386.5px;width:800px;text-align:center;top:702px;height:24px;line-height:24px;font-size:12px;color:#c7d0d9;font-weight:400;letter-spacing:-0.3px;-webkit-text-stroke:0.2px currentColor;">14:00</div>
<div class="a" style="left:1429px;top:728px;width:401px;height:40px;overflow:hidden"><div class="t" style="left:0px;top:-2px;height:24px;line-height:24px;font-size:12px;color:#c7d0d9;font-weight:400;letter-spacing:-0.08px;-webkit-text-stroke:0.15px currentColor;">telecom-k8s-phy02 uid:GPU-3dfd5296-9b64-6508-c1cf-db768a3480bb&nbsp; Current: 0%</div><div class="t" style="left:0px;top:16px;height:24px;line-height:24px;font-size:12px;color:#c7d0d9;font-weight:400;letter-spacing:-0.08px;-webkit-text-stroke:0.15px currentColor;">telecom-k8s-phy02 uid:GPU-d604802e-7bb4-f34f-4799-4076d2fa1815&nbsp; Current: 0%</div></div>
<div class="t" style="left:89px;width:800px;text-align:right;top:816.7px;height:24px;line-height:24px;font-size:12px;color:#c7d0d9;font-weight:400;letter-spacing:-0.3px;-webkit-text-stroke:0.2px currentColor;">32 W</div>
<div class="t" style="left:89px;width:800px;text-align:right;top:861.7px;height:24px;line-height:24px;font-size:12px;color:#c7d0d9;font-weight:400;letter-spacing:-0.3px;-webkit-text-stroke:0.2px currentColor;">31 W</div>
<div class="t" style="left:89px;width:800px;text-align:right;top:906.7px;height:24px;line-height:24px;font-size:12px;color:#c7d0d9;font-weight:400;letter-spacing:-0.3px;-webkit-text-stroke:0.2px currentColor;">30 W</div>
<div class="t" style="left:644.5999999999999px;width:800px;text-align:right;top:816.7px;height:24px;line-height:24px;font-size:12px;color:#c7d0d9;font-weight:400;letter-spacing:-0.3px;-webkit-text-stroke:0.2px currentColor;">800 MHz</div>
<div class="t" style="left:644.5999999999999px;width:800px;text-align:right;top:850.7px;height:24px;line-height:24px;font-size:12px;color:#c7d0d9;font-weight:400;letter-spacing:-0.3px;-webkit-text-stroke:0.2px currentColor;">700 MHz</div>
<div class="t" style="left:644.5999999999999px;width:800px;text-align:right;top:884.7px;height:24px;line-height:24px;font-size:12px;color:#c7d0d9;font-weight:400;letter-spacing:-0.3px;-webkit-text-stroke:0.2px currentColor;">600 MHz</div>
</div>
</body></html>
